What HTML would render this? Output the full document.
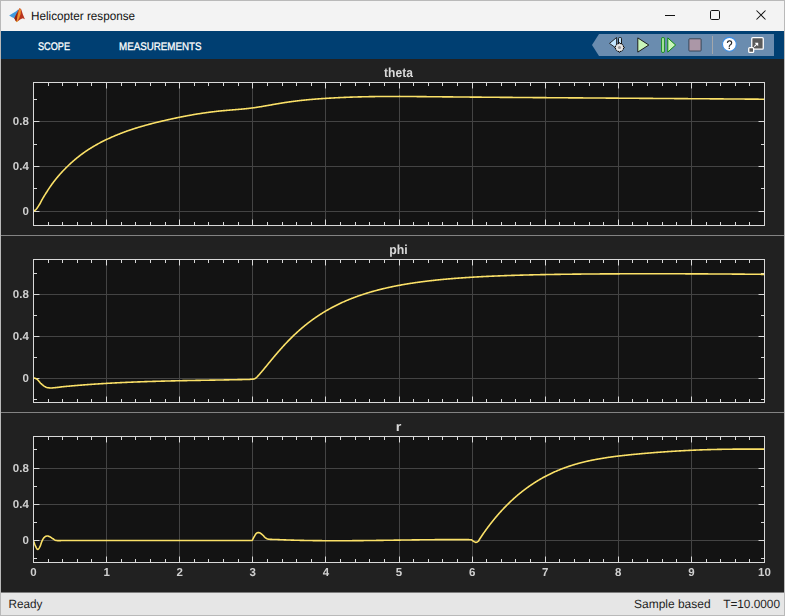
<!DOCTYPE html>
<html><head><meta charset="utf-8"><style>
html,body{margin:0;padding:0;width:785px;height:616px;overflow:hidden;background:#f3f3f3}
svg{position:absolute;left:0;top:0;display:block}
text{text-rendering:geometricPrecision;font-family:"Liberation Sans",sans-serif}
.tl{font-size:11.5px;font-weight:bold;fill:#cfcfcf}
.tt{font-size:13px;font-weight:bold;fill:#d9d9d9}
</style></head><body>
<svg width="785" height="616" viewBox="0 0 785 616" shape-rendering="crispEdges">
<!-- window frame -->
<rect x="0" y="0" width="785" height="616" fill="#b9b9b9"/>
<rect x="1" y="1" width="783" height="30" fill="#f3f3f3"/>
<!-- title -->
<g shape-rendering="geometricPrecision">
 <path d="M9.2,15.4 L12.8,13.2 L15.8,11.6 L18.4,9.2 L18.6,11.5 L16,15.5 L14.3,18.2 L12,17.2 Z" fill="#3f9ade"/>
 <path d="M14.3,18.2 L16.2,14.5 L18.3,10.2 L19.7,7.9 L21.3,9.6 L22.8,14.2 L24.9,19.3 L22.8,18.2 L20.5,19.2 L17.8,21.2 L16.4,22 Z" fill="#b8341e"/>
 <path d="M14.3,18.2 L16.2,14.5 L17.6,12 L17.2,17.5 L16.4,22 Z" fill="#8e2414"/>
 <path d="M19.7,8.2 L20.9,9.8 L20.6,14 L19.2,18 L17.4,21.4 L16.6,21.6 L17.3,17 L18.6,11.5 Z" fill="#f0922c"/>
 <path d="M16.1,21.9 L17.2,20.5 L17.6,21.3 L16.7,22.2 Z" fill="#f6c43e"/>
</g>
<text x="31" y="20" font-size="12" fill="#111" textLength="104" lengthAdjust="spacingAndGlyphs">Helicopter response</text>
<!-- window controls -->
<rect x="665" y="15" width="10" height="1" fill="#111"/>
<rect x="710.5" y="10.5" width="9" height="9" rx="1.2" fill="none" stroke="#111" stroke-width="1" shape-rendering="geometricPrecision"/>
<path d="M756.5,10.5 L765.5,19.5 M765.5,10.5 L756.5,19.5" stroke="#111" stroke-width="1.05" shape-rendering="geometricPrecision"/>
<!-- blue toolbar -->
<rect x="1" y="31" width="783" height="28" fill="#003f72"/>
<text x="38" y="50.2" font-size="11" fill="#ffffff" stroke="#ffffff" stroke-width="0.3" textLength="32" lengthAdjust="spacingAndGlyphs">SCOPE</text>
<text x="119" y="50.2" font-size="11" fill="#ffffff" stroke="#ffffff" stroke-width="0.3" textLength="82.5" lengthAdjust="spacingAndGlyphs">MEASUREMENTS</text>
<path d="M592,45 L599,34 L774,34 L774,56 L599,56 Z" fill="#6a8caf" shape-rendering="geometricPrecision"/>
<g shape-rendering="geometricPrecision">
 <!-- step back + gear -->
 <path d="M609.5,43.4 L616.6,37.5 L616.6,48.5 Z" fill="#c4e6ff" stroke="#1a1a1a" stroke-width="0.9" stroke-linejoin="round"/>
 <rect x="618.5" y="37.6" width="3" height="10" rx="0.8" fill="#c4e6ff" stroke="#1a1a1a" stroke-width="1"/>
 <g transform="translate(619.5,47.5)">
  <path d="M0,-5 L5,0 L0,5 L-5,0 Z" fill="#e6e6e6" stroke="#151515" stroke-width="1" stroke-linejoin="round"/>
  <rect x="-3.4" y="-3.4" width="6.8" height="6.8" rx="1.3" fill="#e6e6e6" stroke="#151515" stroke-width="1"/>
  <circle cx="0" cy="0" r="3.6" fill="#e6e6e6"/>
  <circle cx="0" cy="0" r="1.6" fill="#9a9a9a"/>
 </g>
 <!-- play -->
 <path d="M637.8,37.9 L637.8,52.1 L648.8,45 Z" fill="#c9f5b9" stroke="#1e1e1e" stroke-width="1" stroke-linejoin="round"/>
 <!-- step forward -->
 <rect x="661.7" y="37.7" width="2.6" height="14.6" rx="0.4" fill="#c9f5b9" stroke="#0d8a12" stroke-width="1"/>
 <path d="M667.8,37.9 L667.8,52.1 L675.6,45 Z" fill="#c9f5b9" stroke="#0d8a12" stroke-width="1" stroke-linejoin="round"/>
 <!-- stop -->
 <rect x="688.9" y="38.8" width="12.2" height="12.2" rx="0.7" fill="#ab97a7" stroke="#2c3a48" stroke-width="0.85"/>
 <rect x="712" y="36" width="1" height="18" fill="#a3a7ab"/>
 <!-- help -->
 <circle cx="729.4" cy="44.3" r="6.9" fill="#ffffff" stroke="#3a8ee6" stroke-width="1.1"/>
 <g filter="url(#gf)"><text x="729.5" y="48.8" text-anchor="middle" font-size="12.5" fill="#111111" stroke="#111" stroke-width="0.2" textLength="6" lengthAdjust="spacingAndGlyphs">?</text></g>
 <!-- undock -->
 <rect x="751.75" y="37.65" width="11.5" height="11.5" rx="1" fill="#5a5a5a" stroke="#ffffff" stroke-width="1.3"/>
 <rect x="748.75" y="47.55" width="4.9" height="4.9" rx="1" fill="#5a5a5a" stroke="#ffffff" stroke-width="1.3"/>
 <path d="M754.3,46.6 L757.6,43.3" stroke="#ffffff" stroke-width="1.1"/>
 <path d="M754.6,42.7 L758.2,42.7 L758.2,46.3 Z" fill="#ffffff"/>
</g>
<!-- dark area -->
<rect x="1" y="59" width="783" height="533" fill="#212121"/>
<rect x="1" y="234" width="783" height="3" fill="#212121"/>
<rect x="1" y="235" width="783" height="1" fill="#838383"/>
<rect x="1" y="411" width="783" height="3" fill="#212121"/>
<rect x="1" y="412" width="783" height="1" fill="#838383"/>
<rect x="33" y="82" width="732" height="144" fill="#131313"/>
<rect x="34" y="211" width="730" height="1" fill="#444444"/>
<rect x="34" y="166" width="730" height="1" fill="#444444"/>
<rect x="34" y="121" width="730" height="1" fill="#444444"/>
<rect x="106" y="83" width="1" height="142" fill="#444444"/>
<rect x="179" y="83" width="1" height="142" fill="#444444"/>
<rect x="252" y="83" width="1" height="142" fill="#444444"/>
<rect x="325" y="83" width="1" height="142" fill="#444444"/>
<rect x="399" y="83" width="1" height="142" fill="#444444"/>
<rect x="472" y="83" width="1" height="142" fill="#444444"/>
<rect x="545" y="83" width="1" height="142" fill="#444444"/>
<rect x="618" y="83" width="1" height="142" fill="#444444"/>
<rect x="691" y="83" width="1" height="142" fill="#444444"/>
<rect x="48" y="83" width="1" height="3" fill="#d9d9d9"/>
<rect x="48" y="222" width="1" height="3" fill="#d9d9d9"/>
<rect x="62" y="83" width="1" height="3" fill="#d9d9d9"/>
<rect x="62" y="222" width="1" height="3" fill="#d9d9d9"/>
<rect x="77" y="83" width="1" height="3" fill="#d9d9d9"/>
<rect x="77" y="222" width="1" height="3" fill="#d9d9d9"/>
<rect x="91" y="83" width="1" height="3" fill="#d9d9d9"/>
<rect x="91" y="222" width="1" height="3" fill="#d9d9d9"/>
<rect x="106" y="83" width="1" height="5" fill="#d9d9d9"/>
<rect x="106" y="220" width="1" height="5" fill="#d9d9d9"/>
<rect x="106" y="88" width="1" height="1" fill="#8a8a8a"/>
<rect x="106" y="219" width="1" height="1" fill="#8a8a8a"/>
<rect x="121" y="83" width="1" height="3" fill="#d9d9d9"/>
<rect x="121" y="222" width="1" height="3" fill="#d9d9d9"/>
<rect x="135" y="83" width="1" height="3" fill="#d9d9d9"/>
<rect x="135" y="222" width="1" height="3" fill="#d9d9d9"/>
<rect x="150" y="83" width="1" height="3" fill="#d9d9d9"/>
<rect x="150" y="222" width="1" height="3" fill="#d9d9d9"/>
<rect x="165" y="83" width="1" height="3" fill="#d9d9d9"/>
<rect x="165" y="222" width="1" height="3" fill="#d9d9d9"/>
<rect x="179" y="83" width="1" height="5" fill="#d9d9d9"/>
<rect x="179" y="220" width="1" height="5" fill="#d9d9d9"/>
<rect x="179" y="88" width="1" height="1" fill="#8a8a8a"/>
<rect x="179" y="219" width="1" height="1" fill="#8a8a8a"/>
<rect x="194" y="83" width="1" height="3" fill="#d9d9d9"/>
<rect x="194" y="222" width="1" height="3" fill="#d9d9d9"/>
<rect x="208" y="83" width="1" height="3" fill="#d9d9d9"/>
<rect x="208" y="222" width="1" height="3" fill="#d9d9d9"/>
<rect x="223" y="83" width="1" height="3" fill="#d9d9d9"/>
<rect x="223" y="222" width="1" height="3" fill="#d9d9d9"/>
<rect x="238" y="83" width="1" height="3" fill="#d9d9d9"/>
<rect x="238" y="222" width="1" height="3" fill="#d9d9d9"/>
<rect x="252" y="83" width="1" height="5" fill="#d9d9d9"/>
<rect x="252" y="220" width="1" height="5" fill="#d9d9d9"/>
<rect x="252" y="88" width="1" height="1" fill="#8a8a8a"/>
<rect x="252" y="219" width="1" height="1" fill="#8a8a8a"/>
<rect x="267" y="83" width="1" height="3" fill="#d9d9d9"/>
<rect x="267" y="222" width="1" height="3" fill="#d9d9d9"/>
<rect x="282" y="83" width="1" height="3" fill="#d9d9d9"/>
<rect x="282" y="222" width="1" height="3" fill="#d9d9d9"/>
<rect x="296" y="83" width="1" height="3" fill="#d9d9d9"/>
<rect x="296" y="222" width="1" height="3" fill="#d9d9d9"/>
<rect x="311" y="83" width="1" height="3" fill="#d9d9d9"/>
<rect x="311" y="222" width="1" height="3" fill="#d9d9d9"/>
<rect x="325" y="83" width="1" height="5" fill="#d9d9d9"/>
<rect x="325" y="220" width="1" height="5" fill="#d9d9d9"/>
<rect x="325" y="88" width="1" height="1" fill="#8a8a8a"/>
<rect x="325" y="219" width="1" height="1" fill="#8a8a8a"/>
<rect x="340" y="83" width="1" height="3" fill="#d9d9d9"/>
<rect x="340" y="222" width="1" height="3" fill="#d9d9d9"/>
<rect x="355" y="83" width="1" height="3" fill="#d9d9d9"/>
<rect x="355" y="222" width="1" height="3" fill="#d9d9d9"/>
<rect x="369" y="83" width="1" height="3" fill="#d9d9d9"/>
<rect x="369" y="222" width="1" height="3" fill="#d9d9d9"/>
<rect x="384" y="83" width="1" height="3" fill="#d9d9d9"/>
<rect x="384" y="222" width="1" height="3" fill="#d9d9d9"/>
<rect x="399" y="83" width="1" height="5" fill="#d9d9d9"/>
<rect x="399" y="220" width="1" height="5" fill="#d9d9d9"/>
<rect x="399" y="88" width="1" height="1" fill="#8a8a8a"/>
<rect x="399" y="219" width="1" height="1" fill="#8a8a8a"/>
<rect x="413" y="83" width="1" height="3" fill="#d9d9d9"/>
<rect x="413" y="222" width="1" height="3" fill="#d9d9d9"/>
<rect x="428" y="83" width="1" height="3" fill="#d9d9d9"/>
<rect x="428" y="222" width="1" height="3" fill="#d9d9d9"/>
<rect x="442" y="83" width="1" height="3" fill="#d9d9d9"/>
<rect x="442" y="222" width="1" height="3" fill="#d9d9d9"/>
<rect x="457" y="83" width="1" height="3" fill="#d9d9d9"/>
<rect x="457" y="222" width="1" height="3" fill="#d9d9d9"/>
<rect x="472" y="83" width="1" height="5" fill="#d9d9d9"/>
<rect x="472" y="220" width="1" height="5" fill="#d9d9d9"/>
<rect x="472" y="88" width="1" height="1" fill="#8a8a8a"/>
<rect x="472" y="219" width="1" height="1" fill="#8a8a8a"/>
<rect x="486" y="83" width="1" height="3" fill="#d9d9d9"/>
<rect x="486" y="222" width="1" height="3" fill="#d9d9d9"/>
<rect x="501" y="83" width="1" height="3" fill="#d9d9d9"/>
<rect x="501" y="222" width="1" height="3" fill="#d9d9d9"/>
<rect x="515" y="83" width="1" height="3" fill="#d9d9d9"/>
<rect x="515" y="222" width="1" height="3" fill="#d9d9d9"/>
<rect x="530" y="83" width="1" height="3" fill="#d9d9d9"/>
<rect x="530" y="222" width="1" height="3" fill="#d9d9d9"/>
<rect x="545" y="83" width="1" height="5" fill="#d9d9d9"/>
<rect x="545" y="220" width="1" height="5" fill="#d9d9d9"/>
<rect x="545" y="88" width="1" height="1" fill="#8a8a8a"/>
<rect x="545" y="219" width="1" height="1" fill="#8a8a8a"/>
<rect x="559" y="83" width="1" height="3" fill="#d9d9d9"/>
<rect x="559" y="222" width="1" height="3" fill="#d9d9d9"/>
<rect x="574" y="83" width="1" height="3" fill="#d9d9d9"/>
<rect x="574" y="222" width="1" height="3" fill="#d9d9d9"/>
<rect x="589" y="83" width="1" height="3" fill="#d9d9d9"/>
<rect x="589" y="222" width="1" height="3" fill="#d9d9d9"/>
<rect x="603" y="83" width="1" height="3" fill="#d9d9d9"/>
<rect x="603" y="222" width="1" height="3" fill="#d9d9d9"/>
<rect x="618" y="83" width="1" height="5" fill="#d9d9d9"/>
<rect x="618" y="220" width="1" height="5" fill="#d9d9d9"/>
<rect x="618" y="88" width="1" height="1" fill="#8a8a8a"/>
<rect x="618" y="219" width="1" height="1" fill="#8a8a8a"/>
<rect x="632" y="83" width="1" height="3" fill="#d9d9d9"/>
<rect x="632" y="222" width="1" height="3" fill="#d9d9d9"/>
<rect x="647" y="83" width="1" height="3" fill="#d9d9d9"/>
<rect x="647" y="222" width="1" height="3" fill="#d9d9d9"/>
<rect x="662" y="83" width="1" height="3" fill="#d9d9d9"/>
<rect x="662" y="222" width="1" height="3" fill="#d9d9d9"/>
<rect x="676" y="83" width="1" height="3" fill="#d9d9d9"/>
<rect x="676" y="222" width="1" height="3" fill="#d9d9d9"/>
<rect x="691" y="83" width="1" height="5" fill="#d9d9d9"/>
<rect x="691" y="220" width="1" height="5" fill="#d9d9d9"/>
<rect x="691" y="88" width="1" height="1" fill="#8a8a8a"/>
<rect x="691" y="219" width="1" height="1" fill="#8a8a8a"/>
<rect x="706" y="83" width="1" height="3" fill="#d9d9d9"/>
<rect x="706" y="222" width="1" height="3" fill="#d9d9d9"/>
<rect x="720" y="83" width="1" height="3" fill="#d9d9d9"/>
<rect x="720" y="222" width="1" height="3" fill="#d9d9d9"/>
<rect x="735" y="83" width="1" height="3" fill="#d9d9d9"/>
<rect x="735" y="222" width="1" height="3" fill="#d9d9d9"/>
<rect x="749" y="83" width="1" height="3" fill="#d9d9d9"/>
<rect x="749" y="222" width="1" height="3" fill="#d9d9d9"/>
<rect x="34" y="99" width="3" height="1" fill="#d9d9d9"/>
<rect x="761" y="99" width="3" height="1" fill="#d9d9d9"/>
<rect x="34" y="121" width="5" height="1" fill="#d9d9d9"/>
<rect x="759" y="121" width="5" height="1" fill="#d9d9d9"/>
<rect x="39" y="121" width="1" height="1" fill="#8a8a8a"/>
<rect x="758" y="121" width="1" height="1" fill="#8a8a8a"/>
<rect x="34" y="144" width="3" height="1" fill="#d9d9d9"/>
<rect x="761" y="144" width="3" height="1" fill="#d9d9d9"/>
<rect x="34" y="166" width="5" height="1" fill="#d9d9d9"/>
<rect x="759" y="166" width="5" height="1" fill="#d9d9d9"/>
<rect x="39" y="166" width="1" height="1" fill="#8a8a8a"/>
<rect x="758" y="166" width="1" height="1" fill="#8a8a8a"/>
<rect x="34" y="188" width="3" height="1" fill="#d9d9d9"/>
<rect x="761" y="188" width="3" height="1" fill="#d9d9d9"/>
<rect x="34" y="211" width="5" height="1" fill="#d9d9d9"/>
<rect x="759" y="211" width="5" height="1" fill="#d9d9d9"/>
<rect x="39" y="211" width="1" height="1" fill="#8a8a8a"/>
<rect x="758" y="211" width="1" height="1" fill="#8a8a8a"/>
<rect x="33.5" y="82.5" width="731" height="143" fill="none" stroke="#d9d9d9" stroke-width="1"/>
<clipPath id="c82"><rect x="34" y="83" width="730" height="142"/></clipPath>
<path d="M33.50,211.00 L33.62,210.96 L33.78,210.92 L33.98,210.86 L34.19,210.79 L34.40,210.71 L34.60,210.60 L34.79,210.47 L34.99,210.33 L35.19,210.16 L35.40,209.99 L35.60,209.80 L35.80,209.60 L36.00,209.39 L36.20,209.17 L36.41,208.94 L36.61,208.70 L36.81,208.45 L37.00,208.20 L37.18,207.97 L37.33,207.76 L37.48,207.54 L37.65,207.29 L37.85,206.98 L38.10,206.60 L38.44,206.07 L38.86,205.41 L39.32,204.70 L39.76,204.01 L40.14,203.43 L40.40,203.05 L40.90,201.78 L41.40,200.87 L41.90,199.97 L42.40,199.08 L42.90,198.21 L43.40,197.36 L43.90,196.52 L44.40,195.69 L44.90,194.88 L45.40,194.08 L45.90,193.30 L46.40,192.53 L46.90,191.78 L47.40,190.99 L47.90,190.19 L48.40,189.41 L48.90,188.64 L49.40,187.89 L49.90,187.14 L50.40,186.41 L50.90,185.69 L51.40,184.98 L51.90,184.28 L52.40,183.59 L52.90,182.91 L53.40,182.24 L53.90,181.58 L54.40,180.93 L54.90,180.29 L55.40,179.65 L55.90,179.03 L56.40,178.41 L56.90,177.80 L57.40,177.20 L57.90,176.61 L58.40,176.03 L58.90,175.45 L59.40,174.87 L59.90,174.31 L60.40,173.75 L60.90,173.20 L61.40,172.65 L61.90,172.10 L62.40,171.57 L62.90,171.03 L63.40,170.51 L63.90,169.98 L64.40,169.46 L64.90,168.95 L65.40,168.44 L65.90,167.94 L66.40,167.44 L66.90,166.95 L67.40,166.46 L67.90,165.97 L68.40,165.49 L68.90,165.01 L69.40,164.54 L69.90,164.08 L70.40,163.61 L70.90,163.15 L71.40,162.70 L71.90,162.25 L72.40,161.81 L72.90,161.36 L73.40,160.93 L73.90,160.50 L74.40,160.07 L74.90,159.64 L75.40,159.22 L75.90,158.81 L76.40,158.39 L76.90,157.99 L77.40,157.58 L77.90,157.18 L78.40,156.78 L78.90,156.39 L79.40,156.00 L79.90,155.62 L80.40,155.23 L80.90,154.86 L81.40,154.48 L81.90,154.11 L82.40,153.74 L82.90,153.38 L83.40,153.02 L83.90,152.66 L84.40,152.31 L84.90,151.96 L85.40,151.61 L85.90,151.27 L86.40,150.93 L86.90,150.59 L87.40,150.26 L87.90,149.93 L88.40,149.60 L88.90,149.28 L89.40,148.95 L89.90,148.64 L90.40,148.32 L90.90,148.01 L91.40,147.70 L91.90,147.39 L92.40,147.09 L92.90,146.79 L93.40,146.49 L93.90,146.19 L94.40,145.90 L94.90,145.61 L95.40,145.32 L95.90,145.04 L96.40,144.75 L96.90,144.47 L97.40,144.20 L97.90,143.92 L98.40,143.65 L98.90,143.38 L99.40,143.11 L99.90,142.84 L100.40,142.58 L100.90,142.32 L101.40,142.06 L101.90,141.80 L102.40,141.55 L102.90,141.29 L103.40,141.04 L103.90,140.79 L104.40,140.55 L104.90,140.30 L105.40,140.06 L105.90,139.82 L106.40,139.58 L106.90,139.34 L107.40,139.10 L107.90,138.87 L108.40,138.64 L108.90,138.41 L109.40,138.18 L109.90,137.95 L110.40,137.72 L110.90,137.50 L111.40,137.28 L111.90,137.05 L112.40,136.84 L112.90,136.62 L113.40,136.40 L113.90,136.19 L114.40,135.97 L114.90,135.76 L115.40,135.55 L115.90,135.34 L116.40,135.14 L116.90,134.93 L117.40,134.73 L117.90,134.53 L118.40,134.32 L118.90,134.13 L119.40,133.93 L119.90,133.73 L120.40,133.54 L120.90,133.34 L121.40,133.15 L121.90,132.96 L122.40,132.77 L122.90,132.58 L123.40,132.39 L123.90,132.21 L124.40,132.03 L124.90,131.84 L125.40,131.66 L125.90,131.48 L126.40,131.30 L126.90,131.12 L127.40,130.95 L127.90,130.77 L128.40,130.60 L128.90,130.43 L129.40,130.26 L129.90,130.09 L130.40,129.92 L130.90,129.75 L131.40,129.58 L131.90,129.42 L132.40,129.25 L132.90,129.09 L133.40,128.93 L133.90,128.77 L134.40,128.61 L134.90,128.45 L135.40,128.29 L135.90,128.13 L136.40,127.98 L136.90,127.82 L137.40,127.67 L137.90,127.52 L138.40,127.36 L138.90,127.21 L139.40,127.06 L139.90,126.91 L140.40,126.77 L140.90,126.62 L141.40,126.47 L141.90,126.33 L142.40,126.18 L142.90,126.04 L143.40,125.90 L143.90,125.76 L144.40,125.62 L144.90,125.48 L145.40,125.34 L145.90,125.20 L146.40,125.06 L146.90,124.93 L147.40,124.79 L147.90,124.66 L148.40,124.52 L148.90,124.39 L149.40,124.25 L149.90,124.12 L150.40,123.99 L150.90,123.86 L151.40,123.73 L151.90,123.60 L152.40,123.47 L152.90,123.34 L153.40,123.22 L153.90,123.09 L154.40,122.96 L154.90,122.84 L155.40,122.71 L155.90,122.59 L156.40,122.47 L156.90,122.34 L157.40,122.22 L157.90,122.10 L158.40,121.98 L158.90,121.85 L159.40,121.73 L159.90,121.61 L160.40,121.49 L160.90,121.37 L161.40,121.25 L161.90,121.14 L162.40,121.02 L162.90,120.90 L163.40,120.78 L163.90,120.67 L164.40,120.55 L164.90,120.43 L165.40,120.32 L165.90,120.20 L166.40,120.09 L166.90,119.98 L167.40,119.86 L167.90,119.75 L168.40,119.64 L168.90,119.52 L169.40,119.41 L169.90,119.30 L170.40,119.19 L170.90,119.08 L171.40,118.97 L171.90,118.86 L172.40,118.75 L172.90,118.64 L173.40,118.54 L173.90,118.43 L174.40,118.32 L174.90,118.22 L175.40,118.11 L175.90,118.01 L176.40,117.90 L176.90,117.80 L177.40,117.69 L177.90,117.59 L178.40,117.49 L178.90,117.38 L179.40,117.28 L179.90,117.18 L180.40,117.08 L180.90,116.98 L181.40,116.88 L181.90,116.78 L182.40,116.68 L182.90,116.59 L183.40,116.49 L183.90,116.39 L184.40,116.30 L184.90,116.20 L185.40,116.10 L185.90,116.01 L186.40,115.92 L186.90,115.82 L187.40,115.73 L187.90,115.64 L188.40,115.54 L188.90,115.45 L189.40,115.36 L189.90,115.27 L190.40,115.18 L190.90,115.09 L191.40,115.01 L191.90,114.92 L192.40,114.83 L192.90,114.74 L193.40,114.66 L193.90,114.57 L194.40,114.49 L194.90,114.40 L195.40,114.32 L195.90,114.24 L196.40,114.15 L196.90,114.07 L197.40,113.99 L197.90,113.91 L198.40,113.83 L198.90,113.75 L199.40,113.67 L199.90,113.59 L200.40,113.52 L200.90,113.44 L201.40,113.36 L201.90,113.29 L202.40,113.21 L202.90,113.14 L203.40,113.06 L203.90,112.99 L204.40,112.92 L204.90,112.85 L205.40,112.77 L205.90,112.70 L206.40,112.63 L206.90,112.57 L207.40,112.50 L207.90,112.43 L208.40,112.36 L208.90,112.30 L209.40,112.23 L209.90,112.16 L210.40,112.10 L210.90,112.04 L211.40,111.97 L211.90,111.91 L212.40,111.85 L212.90,111.79 L213.40,111.73 L213.90,111.67 L214.40,111.61 L214.90,111.55 L215.40,111.49 L215.90,111.44 L216.40,111.38 L216.90,111.32 L217.40,111.27 L217.90,111.21 L218.40,111.16 L218.90,111.11 L219.40,111.06 L219.90,111.01 L220.40,110.96 L220.90,110.91 L221.40,110.86 L221.90,110.81 L222.40,110.76 L222.90,110.71 L223.40,110.67 L223.90,110.62 L224.40,110.58 L224.90,110.53 L225.40,110.49 L225.90,110.44 L226.40,110.40 L226.90,110.36 L227.40,110.31 L227.90,110.27 L228.40,110.23 L228.90,110.19 L229.40,110.15 L229.90,110.11 L230.40,110.06 L230.90,110.02 L231.40,109.98 L231.90,109.94 L232.40,109.90 L232.90,109.86 L233.40,109.82 L233.90,109.78 L234.40,109.74 L234.90,109.70 L235.40,109.66 L235.90,109.61 L236.40,109.57 L236.90,109.53 L237.40,109.49 L237.90,109.45 L238.40,109.40 L238.90,109.36 L239.40,109.32 L239.90,109.27 L240.40,109.23 L240.90,109.18 L241.40,109.14 L241.90,109.09 L242.40,109.05 L242.90,109.00 L243.40,108.95 L243.90,108.90 L244.40,108.85 L244.90,108.80 L245.40,108.75 L245.90,108.70 L246.40,108.65 L246.90,108.59 L247.40,108.54 L247.90,108.48 L248.40,108.43 L248.90,108.37 L249.40,108.31 L249.90,108.25 L250.40,108.19 L250.90,108.13 L251.40,108.07 L251.90,108.01 L252.40,107.94 L252.90,107.87 L253.40,107.81 L253.90,107.74 L254.40,107.67 L254.90,107.60 L255.40,107.53 L255.90,107.45 L256.40,107.38 L256.90,107.30 L257.40,107.23 L257.90,107.15 L258.40,107.07 L258.90,106.99 L259.40,106.91 L259.90,106.83 L260.40,106.75 L260.90,106.67 L261.40,106.59 L261.90,106.50 L262.40,106.42 L262.90,106.33 L263.40,106.25 L263.90,106.16 L264.40,106.08 L264.90,105.99 L265.40,105.90 L265.90,105.82 L266.40,105.73 L266.90,105.64 L267.40,105.55 L267.90,105.46 L268.40,105.38 L268.90,105.29 L269.40,105.20 L269.90,105.11 L270.40,105.02 L270.90,104.93 L271.40,104.84 L271.90,104.75 L272.40,104.66 L272.90,104.57 L273.40,104.49 L273.90,104.40 L274.40,104.31 L274.90,104.22 L275.40,104.13 L275.90,104.05 L276.40,103.96 L276.90,103.87 L277.40,103.79 L277.90,103.70 L278.40,103.61 L278.90,103.53 L279.40,103.45 L279.90,103.36 L280.40,103.28 L280.90,103.20 L281.40,103.12 L281.90,103.03 L282.40,102.95 L282.90,102.87 L283.40,102.80 L283.90,102.72 L284.40,102.64 L284.90,102.56 L285.40,102.49 L285.90,102.41 L286.40,102.34 L286.90,102.27 L287.40,102.19 L287.90,102.12 L288.40,102.05 L288.90,101.98 L289.40,101.91 L289.90,101.84 L290.40,101.77 L290.90,101.70 L291.40,101.63 L291.90,101.56 L292.40,101.50 L292.90,101.43 L293.40,101.37 L293.90,101.30 L294.40,101.24 L294.90,101.18 L295.40,101.11 L295.90,101.05 L296.40,100.99 L296.90,100.93 L297.40,100.87 L297.90,100.81 L298.40,100.75 L298.90,100.69 L299.40,100.64 L299.90,100.58 L300.40,100.52 L300.90,100.47 L301.40,100.41 L301.90,100.36 L302.40,100.30 L302.90,100.25 L303.40,100.20 L303.90,100.15 L304.40,100.09 L304.90,100.04 L305.40,99.99 L305.90,99.94 L306.40,99.89 L306.90,99.84 L307.40,99.80 L307.90,99.75 L308.40,99.70 L308.90,99.65 L309.40,99.61 L309.90,99.56 L310.40,99.52 L310.90,99.47 L311.40,99.43 L311.90,99.39 L312.40,99.34 L312.90,99.30 L313.40,99.26 L313.90,99.22 L314.40,99.18 L314.90,99.14 L315.40,99.10 L315.90,99.06 L316.40,99.02 L316.90,98.98 L317.40,98.94 L317.90,98.90 L318.40,98.87 L318.90,98.83 L319.40,98.79 L319.90,98.76 L320.40,98.72 L320.90,98.69 L321.40,98.66 L321.90,98.62 L322.40,98.59 L322.90,98.56 L323.40,98.52 L323.90,98.49 L324.40,98.46 L324.90,98.43 L325.40,98.40 L325.90,98.37 L326.40,98.34 L326.90,98.31 L327.40,98.28 L327.90,98.25 L328.40,98.22 L328.90,98.20 L329.40,98.17 L329.90,98.14 L330.40,98.11 L330.90,98.08 L331.40,98.05 L331.90,98.02 L332.40,97.99 L332.90,97.96 L333.40,97.93 L333.90,97.90 L334.40,97.88 L334.90,97.85 L335.40,97.82 L335.90,97.79 L336.40,97.77 L336.90,97.74 L337.40,97.72 L337.90,97.69 L338.40,97.66 L338.90,97.64 L339.40,97.62 L339.90,97.59 L340.40,97.57 L340.90,97.54 L341.40,97.52 L341.90,97.50 L342.40,97.47 L342.90,97.45 L343.40,97.43 L343.90,97.41 L344.40,97.39 L344.90,97.37 L345.40,97.35 L345.90,97.33 L346.40,97.31 L346.90,97.29 L347.40,97.27 L347.90,97.25 L348.40,97.23 L348.90,97.21 L349.40,97.19 L349.90,97.17 L350.40,97.15 L350.90,97.14 L351.40,97.12 L351.90,97.10 L352.40,97.09 L352.90,97.07 L353.40,97.05 L353.90,97.04 L354.40,97.02 L354.90,97.01 L355.40,96.99 L355.90,96.98 L356.40,96.96 L356.90,96.95 L357.40,96.93 L357.90,96.92 L358.40,96.90 L358.90,96.89 L359.40,96.88 L359.90,96.86 L360.40,96.85 L360.90,96.84 L361.40,96.83 L361.90,96.81 L362.40,96.80 L362.90,96.79 L363.40,96.78 L363.90,96.77 L364.40,96.76 L364.90,96.75 L365.40,96.74 L365.90,96.73 L366.40,96.72 L366.90,96.71 L367.40,96.70 L367.90,96.69 L368.40,96.68 L368.90,96.67 L369.40,96.66 L369.90,96.65 L370.40,96.64 L370.90,96.64 L371.40,96.63 L371.90,96.62 L372.40,96.61 L372.90,96.60 L373.40,96.60 L373.90,96.59 L374.40,96.58 L374.90,96.58 L375.40,96.57 L375.90,96.56 L376.40,96.56 L376.90,96.55 L377.40,96.55 L377.90,96.54 L378.40,96.53 L378.90,96.53 L379.40,96.52 L379.90,96.52 L380.40,96.51 L380.90,96.51 L381.40,96.51 L381.90,96.50 L382.40,96.50 L382.90,96.49 L383.40,96.49 L383.90,96.48 L384.40,96.48 L384.90,96.48 L385.40,96.47 L385.90,96.47 L386.40,96.47 L386.90,96.46 L387.40,96.46 L387.90,96.46 L388.40,96.46 L388.90,96.45 L389.40,96.45 L389.90,96.45 L390.40,96.45 L390.90,96.44 L391.40,96.44 L391.90,96.44 L392.40,96.44 L392.90,96.44 L393.40,96.44 L393.90,96.43 L394.40,96.43 L394.90,96.43 L395.40,96.43 L395.90,96.43 L396.40,96.43 L396.90,96.43 L397.40,96.43 L397.90,96.43 L398.40,96.43 L398.90,96.43 L399.40,96.42 L399.90,96.42 L400.40,96.43 L400.90,96.43 L401.40,96.43 L401.90,96.44 L402.40,96.44 L402.90,96.45 L403.40,96.45 L403.90,96.46 L404.40,96.46 L404.90,96.46 L405.40,96.47 L405.90,96.47 L406.40,96.48 L406.90,96.48 L407.40,96.49 L407.90,96.49 L408.40,96.50 L408.90,96.50 L409.40,96.50 L409.90,96.51 L410.40,96.51 L410.90,96.52 L411.40,96.52 L411.90,96.53 L412.40,96.53 L412.90,96.54 L413.40,96.54 L413.90,96.55 L414.40,96.55 L414.90,96.56 L415.40,96.56 L415.90,96.57 L416.40,96.57 L416.90,96.58 L417.40,96.58 L417.90,96.59 L418.40,96.59 L418.90,96.60 L419.40,96.60 L419.90,96.61 L420.40,96.61 L420.90,96.62 L421.40,96.62 L421.90,96.63 L422.40,96.63 L422.90,96.64 L423.40,96.64 L423.90,96.65 L424.40,96.65 L424.90,96.66 L425.40,96.66 L425.90,96.67 L426.40,96.67 L426.90,96.68 L427.40,96.68 L427.90,96.69 L428.40,96.69 L428.90,96.70 L429.40,96.70 L429.90,96.71 L430.40,96.71 L430.90,96.72 L431.40,96.72 L431.90,96.73 L432.40,96.73 L432.90,96.74 L433.40,96.74 L433.90,96.75 L434.40,96.75 L434.90,96.76 L435.40,96.76 L435.90,96.77 L436.40,96.77 L436.90,96.78 L437.40,96.78 L437.90,96.78 L438.40,96.79 L438.90,96.79 L439.40,96.80 L439.90,96.80 L440.40,96.81 L440.90,96.81 L441.40,96.82 L441.90,96.82 L442.40,96.83 L442.90,96.83 L443.40,96.84 L443.90,96.84 L444.40,96.85 L444.90,96.85 L445.40,96.86 L445.90,96.86 L446.40,96.86 L446.90,96.87 L447.40,96.87 L447.90,96.88 L448.40,96.88 L448.90,96.89 L449.40,96.89 L449.90,96.90 L450.40,96.90 L450.90,96.91 L451.40,96.91 L451.90,96.92 L452.40,96.92 L452.90,96.92 L453.40,96.93 L453.90,96.93 L454.40,96.94 L454.90,96.94 L455.40,96.95 L455.90,96.95 L456.40,96.96 L456.90,96.96 L457.40,96.97 L457.90,96.97 L458.40,96.97 L458.90,96.98 L459.40,96.98 L459.90,96.99 L460.40,96.99 L460.90,97.00 L461.40,97.00 L461.90,97.01 L462.40,97.01 L462.90,97.01 L463.40,97.02 L463.90,97.02 L464.40,97.03 L464.90,97.03 L465.40,97.04 L465.90,97.04 L466.40,97.05 L466.90,97.05 L467.40,97.05 L467.90,97.06 L468.40,97.06 L468.90,97.07 L469.40,97.07 L469.90,97.08 L470.40,97.08 L470.90,97.08 L471.40,97.09 L471.90,97.09 L472.40,97.10 L472.90,97.10 L473.40,97.11 L473.90,97.11 L474.40,97.11 L474.90,97.12 L475.40,97.12 L475.90,97.13 L476.40,97.13 L476.90,97.14 L477.40,97.14 L477.90,97.14 L478.40,97.15 L478.90,97.15 L479.40,97.16 L479.90,97.16 L480.40,97.17 L480.90,97.17 L481.40,97.17 L481.90,97.18 L482.40,97.18 L482.90,97.19 L483.40,97.19 L483.90,97.19 L484.40,97.20 L484.90,97.20 L485.40,97.21 L485.90,97.21 L486.40,97.22 L486.90,97.22 L487.40,97.22 L487.90,97.23 L488.40,97.23 L488.90,97.24 L489.40,97.24 L489.90,97.24 L490.40,97.25 L490.90,97.25 L491.40,97.26 L491.90,97.26 L492.40,97.26 L492.90,97.27 L493.40,97.27 L493.90,97.28 L494.40,97.28 L494.90,97.29 L495.40,97.29 L495.90,97.29 L496.40,97.30 L496.90,97.30 L497.40,97.31 L497.90,97.31 L498.40,97.31 L498.90,97.32 L499.40,97.32 L499.90,97.33 L500.40,97.33 L500.90,97.33 L501.40,97.34 L501.90,97.34 L502.40,97.35 L502.90,97.35 L503.40,97.35 L503.90,97.36 L504.40,97.36 L504.90,97.37 L505.40,97.37 L505.90,97.37 L506.40,97.38 L506.90,97.38 L507.40,97.38 L507.90,97.39 L508.40,97.39 L508.90,97.40 L509.40,97.40 L509.90,97.40 L510.40,97.41 L510.90,97.41 L511.40,97.42 L511.90,97.42 L512.40,97.42 L512.90,97.43 L513.40,97.43 L513.90,97.44 L514.40,97.44 L514.90,97.44 L515.40,97.45 L515.90,97.45 L516.40,97.45 L516.90,97.46 L517.40,97.46 L517.90,97.47 L518.40,97.47 L518.90,97.47 L519.40,97.48 L519.90,97.48 L520.40,97.48 L520.90,97.49 L521.40,97.49 L521.90,97.50 L522.40,97.50 L522.90,97.50 L523.40,97.51 L523.90,97.51 L524.40,97.51 L524.90,97.52 L525.40,97.52 L525.90,97.53 L526.40,97.53 L526.90,97.53 L527.40,97.54 L527.90,97.54 L528.40,97.54 L528.90,97.55 L529.40,97.55 L529.90,97.56 L530.40,97.56 L530.90,97.56 L531.40,97.57 L531.90,97.57 L532.40,97.57 L532.90,97.58 L533.40,97.58 L533.90,97.58 L534.40,97.59 L534.90,97.59 L535.40,97.60 L535.90,97.60 L536.40,97.60 L536.90,97.61 L537.40,97.61 L537.90,97.61 L538.40,97.62 L538.90,97.62 L539.40,97.62 L539.90,97.63 L540.40,97.63 L540.90,97.64 L541.40,97.64 L541.90,97.64 L542.40,97.65 L542.90,97.65 L543.40,97.65 L543.90,97.66 L544.40,97.66 L544.90,97.66 L545.40,97.67 L545.90,97.67 L546.40,97.67 L546.90,97.68 L547.40,97.68 L547.90,97.69 L548.40,97.69 L548.90,97.69 L549.40,97.70 L549.90,97.70 L550.40,97.70 L550.90,97.71 L551.40,97.71 L551.90,97.71 L552.40,97.72 L552.90,97.72 L553.40,97.72 L553.90,97.73 L554.40,97.73 L554.90,97.73 L555.40,97.74 L555.90,97.74 L556.40,97.74 L556.90,97.75 L557.40,97.75 L557.90,97.76 L558.40,97.76 L558.90,97.76 L559.40,97.77 L559.90,97.77 L560.40,97.77 L560.90,97.78 L561.40,97.78 L561.90,97.78 L562.40,97.79 L562.90,97.79 L563.40,97.79 L563.90,97.80 L564.40,97.80 L564.90,97.80 L565.40,97.81 L565.90,97.81 L566.40,97.81 L566.90,97.82 L567.40,97.82 L567.90,97.82 L568.40,97.83 L568.90,97.83 L569.40,97.83 L569.90,97.84 L570.40,97.84 L570.90,97.84 L571.40,97.85 L571.90,97.85 L572.40,97.85 L572.90,97.86 L573.40,97.86 L573.90,97.86 L574.40,97.87 L574.90,97.87 L575.40,97.87 L575.90,97.88 L576.40,97.88 L576.90,97.88 L577.40,97.89 L577.90,97.89 L578.40,97.89 L578.90,97.90 L579.40,97.90 L579.90,97.90 L580.40,97.91 L580.90,97.91 L581.40,97.91 L581.90,97.92 L582.40,97.92 L582.90,97.92 L583.40,97.93 L583.90,97.93 L584.40,97.93 L584.90,97.94 L585.40,97.94 L585.90,97.94 L586.40,97.95 L586.90,97.95 L587.40,97.95 L587.90,97.96 L588.40,97.96 L588.90,97.96 L589.40,97.97 L589.90,97.97 L590.40,97.97 L590.90,97.98 L591.40,97.98 L591.90,97.98 L592.40,97.98 L592.90,97.99 L593.40,97.99 L593.90,97.99 L594.40,98.00 L594.90,98.00 L595.40,98.00 L595.90,98.01 L596.40,98.01 L596.90,98.01 L597.40,98.02 L597.90,98.02 L598.40,98.02 L598.90,98.03 L599.40,98.03 L599.90,98.03 L600.40,98.04 L600.90,98.04 L601.40,98.04 L601.90,98.05 L602.40,98.05 L602.90,98.06 L603.40,98.06 L603.90,98.06 L604.40,98.07 L604.90,98.07 L605.40,98.07 L605.90,98.08 L606.40,98.08 L606.90,98.09 L607.40,98.09 L607.90,98.09 L608.40,98.10 L608.90,98.10 L609.40,98.10 L609.90,98.11 L610.40,98.11 L610.90,98.12 L611.40,98.12 L611.90,98.12 L612.40,98.13 L612.90,98.13 L613.40,98.13 L613.90,98.14 L614.40,98.14 L614.90,98.15 L615.40,98.15 L615.90,98.15 L616.40,98.16 L616.90,98.16 L617.40,98.16 L617.90,98.17 L618.40,98.17 L618.90,98.18 L619.40,98.18 L619.90,98.18 L620.40,98.19 L620.90,98.19 L621.40,98.19 L621.90,98.20 L622.40,98.20 L622.90,98.21 L623.40,98.21 L623.90,98.21 L624.40,98.22 L624.90,98.22 L625.40,98.22 L625.90,98.23 L626.40,98.23 L626.90,98.23 L627.40,98.24 L627.90,98.24 L628.40,98.25 L628.90,98.25 L629.40,98.25 L629.90,98.26 L630.40,98.26 L630.90,98.26 L631.40,98.27 L631.90,98.27 L632.40,98.27 L632.90,98.28 L633.40,98.28 L633.90,98.29 L634.40,98.29 L634.90,98.29 L635.40,98.30 L635.90,98.30 L636.40,98.30 L636.90,98.31 L637.40,98.31 L637.90,98.31 L638.40,98.32 L638.90,98.32 L639.40,98.33 L639.90,98.33 L640.40,98.33 L640.90,98.34 L641.40,98.34 L641.90,98.34 L642.40,98.35 L642.90,98.35 L643.40,98.35 L643.90,98.36 L644.40,98.36 L644.90,98.37 L645.40,98.37 L645.90,98.37 L646.40,98.38 L646.90,98.38 L647.40,98.38 L647.90,98.39 L648.40,98.39 L648.90,98.39 L649.40,98.40 L649.90,98.40 L650.40,98.41 L650.90,98.41 L651.40,98.41 L651.90,98.42 L652.40,98.42 L652.90,98.42 L653.40,98.43 L653.90,98.43 L654.40,98.43 L654.90,98.44 L655.40,98.44 L655.90,98.44 L656.40,98.45 L656.90,98.45 L657.40,98.46 L657.90,98.46 L658.40,98.46 L658.90,98.47 L659.40,98.47 L659.90,98.47 L660.40,98.48 L660.90,98.48 L661.40,98.48 L661.90,98.49 L662.40,98.49 L662.90,98.49 L663.40,98.50 L663.90,98.50 L664.40,98.51 L664.90,98.51 L665.40,98.51 L665.90,98.52 L666.40,98.52 L666.90,98.52 L667.40,98.53 L667.90,98.53 L668.40,98.53 L668.90,98.54 L669.40,98.54 L669.90,98.54 L670.40,98.55 L670.90,98.55 L671.40,98.56 L671.90,98.56 L672.40,98.56 L672.90,98.57 L673.40,98.57 L673.90,98.57 L674.40,98.58 L674.90,98.58 L675.40,98.58 L675.90,98.59 L676.40,98.59 L676.90,98.59 L677.40,98.60 L677.90,98.60 L678.40,98.61 L678.90,98.61 L679.40,98.61 L679.90,98.62 L680.40,98.62 L680.90,98.62 L681.40,98.63 L681.90,98.63 L682.40,98.63 L682.90,98.64 L683.40,98.64 L683.90,98.64 L684.40,98.65 L684.90,98.65 L685.40,98.65 L685.90,98.66 L686.40,98.66 L686.90,98.67 L687.40,98.67 L687.90,98.67 L688.40,98.68 L688.90,98.68 L689.40,98.68 L689.90,98.69 L690.40,98.69 L690.90,98.69 L691.40,98.70 L691.90,98.70 L692.40,98.70 L692.90,98.71 L693.40,98.71 L693.90,98.71 L694.40,98.72 L694.90,98.72 L695.40,98.73 L695.90,98.73 L696.40,98.73 L696.90,98.74 L697.40,98.74 L697.90,98.74 L698.40,98.75 L698.90,98.75 L699.40,98.75 L699.90,98.76 L700.40,98.76 L700.90,98.76 L701.40,98.77 L701.90,98.77 L702.40,98.77 L702.90,98.78 L703.40,98.78 L703.90,98.79 L704.40,98.79 L704.90,98.79 L705.40,98.80 L705.90,98.80 L706.40,98.80 L706.90,98.81 L707.40,98.81 L707.90,98.81 L708.40,98.82 L708.90,98.82 L709.40,98.82 L709.90,98.83 L710.40,98.83 L710.90,98.84 L711.40,98.84 L711.90,98.84 L712.40,98.85 L712.90,98.85 L713.40,98.85 L713.90,98.86 L714.40,98.86 L714.90,98.86 L715.40,98.87 L715.90,98.87 L716.40,98.87 L716.90,98.88 L717.40,98.88 L717.90,98.88 L718.40,98.89 L718.90,98.89 L719.40,98.90 L719.90,98.90 L720.40,98.90 L720.90,98.91 L721.40,98.91 L721.90,98.91 L722.40,98.92 L722.90,98.92 L723.40,98.92 L723.90,98.93 L724.40,98.93 L724.90,98.93 L725.40,98.94 L725.90,98.94 L726.40,98.94 L726.90,98.95 L727.40,98.95 L727.90,98.96 L728.40,98.96 L728.90,98.96 L729.40,98.97 L729.90,98.97 L730.40,98.97 L730.90,98.98 L731.40,98.98 L731.90,98.98 L732.40,98.99 L732.90,98.99 L733.40,98.99 L733.90,99.00 L734.40,99.00 L734.90,99.01 L735.40,99.01 L735.90,99.01 L736.40,99.02 L736.90,99.02 L737.40,99.02 L737.90,99.03 L738.40,99.03 L738.90,99.03 L739.40,99.04 L739.90,99.04 L740.40,99.04 L740.90,99.05 L741.40,99.05 L741.90,99.06 L742.40,99.06 L742.90,99.06 L743.40,99.07 L743.90,99.07 L744.40,99.07 L744.90,99.08 L745.40,99.08 L745.90,99.08 L746.40,99.09 L746.90,99.09 L747.40,99.09 L747.90,99.10 L748.40,99.10 L748.90,99.11 L749.40,99.11 L749.90,99.11 L750.40,99.12 L750.90,99.12 L751.40,99.12 L751.90,99.13 L752.40,99.13 L752.90,99.13 L753.40,99.14 L753.90,99.14 L754.40,99.15 L754.90,99.15 L755.40,99.15 L755.90,99.16 L756.40,99.16 L756.90,99.16 L757.40,99.17 L757.90,99.17 L758.40,99.17 L758.90,99.18 L759.40,99.18 L759.90,99.19 L760.40,99.19 L760.90,99.19 L761.40,99.20 L761.90,99.20 L762.40,99.20 L762.90,99.21 L763.40,99.21 L763.90,99.21 L764.40,99.22 L764.50,99.22" fill="none" stroke="#fbe168" stroke-width="1.6" stroke-linejoin="round" shape-rendering="geometricPrecision" clip-path="url(#c82)"/>
<rect x="33" y="259" width="732" height="144" fill="#131313"/>
<rect x="34" y="378" width="730" height="1" fill="#444444"/>
<rect x="34" y="336" width="730" height="1" fill="#444444"/>
<rect x="34" y="294" width="730" height="1" fill="#444444"/>
<rect x="106" y="260" width="1" height="142" fill="#444444"/>
<rect x="179" y="260" width="1" height="142" fill="#444444"/>
<rect x="252" y="260" width="1" height="142" fill="#444444"/>
<rect x="325" y="260" width="1" height="142" fill="#444444"/>
<rect x="399" y="260" width="1" height="142" fill="#444444"/>
<rect x="472" y="260" width="1" height="142" fill="#444444"/>
<rect x="545" y="260" width="1" height="142" fill="#444444"/>
<rect x="618" y="260" width="1" height="142" fill="#444444"/>
<rect x="691" y="260" width="1" height="142" fill="#444444"/>
<rect x="48" y="260" width="1" height="3" fill="#d9d9d9"/>
<rect x="48" y="399" width="1" height="3" fill="#d9d9d9"/>
<rect x="62" y="260" width="1" height="3" fill="#d9d9d9"/>
<rect x="62" y="399" width="1" height="3" fill="#d9d9d9"/>
<rect x="77" y="260" width="1" height="3" fill="#d9d9d9"/>
<rect x="77" y="399" width="1" height="3" fill="#d9d9d9"/>
<rect x="91" y="260" width="1" height="3" fill="#d9d9d9"/>
<rect x="91" y="399" width="1" height="3" fill="#d9d9d9"/>
<rect x="106" y="260" width="1" height="5" fill="#d9d9d9"/>
<rect x="106" y="397" width="1" height="5" fill="#d9d9d9"/>
<rect x="106" y="265" width="1" height="1" fill="#8a8a8a"/>
<rect x="106" y="396" width="1" height="1" fill="#8a8a8a"/>
<rect x="121" y="260" width="1" height="3" fill="#d9d9d9"/>
<rect x="121" y="399" width="1" height="3" fill="#d9d9d9"/>
<rect x="135" y="260" width="1" height="3" fill="#d9d9d9"/>
<rect x="135" y="399" width="1" height="3" fill="#d9d9d9"/>
<rect x="150" y="260" width="1" height="3" fill="#d9d9d9"/>
<rect x="150" y="399" width="1" height="3" fill="#d9d9d9"/>
<rect x="165" y="260" width="1" height="3" fill="#d9d9d9"/>
<rect x="165" y="399" width="1" height="3" fill="#d9d9d9"/>
<rect x="179" y="260" width="1" height="5" fill="#d9d9d9"/>
<rect x="179" y="397" width="1" height="5" fill="#d9d9d9"/>
<rect x="179" y="265" width="1" height="1" fill="#8a8a8a"/>
<rect x="179" y="396" width="1" height="1" fill="#8a8a8a"/>
<rect x="194" y="260" width="1" height="3" fill="#d9d9d9"/>
<rect x="194" y="399" width="1" height="3" fill="#d9d9d9"/>
<rect x="208" y="260" width="1" height="3" fill="#d9d9d9"/>
<rect x="208" y="399" width="1" height="3" fill="#d9d9d9"/>
<rect x="223" y="260" width="1" height="3" fill="#d9d9d9"/>
<rect x="223" y="399" width="1" height="3" fill="#d9d9d9"/>
<rect x="238" y="260" width="1" height="3" fill="#d9d9d9"/>
<rect x="238" y="399" width="1" height="3" fill="#d9d9d9"/>
<rect x="252" y="260" width="1" height="5" fill="#d9d9d9"/>
<rect x="252" y="397" width="1" height="5" fill="#d9d9d9"/>
<rect x="252" y="265" width="1" height="1" fill="#8a8a8a"/>
<rect x="252" y="396" width="1" height="1" fill="#8a8a8a"/>
<rect x="267" y="260" width="1" height="3" fill="#d9d9d9"/>
<rect x="267" y="399" width="1" height="3" fill="#d9d9d9"/>
<rect x="282" y="260" width="1" height="3" fill="#d9d9d9"/>
<rect x="282" y="399" width="1" height="3" fill="#d9d9d9"/>
<rect x="296" y="260" width="1" height="3" fill="#d9d9d9"/>
<rect x="296" y="399" width="1" height="3" fill="#d9d9d9"/>
<rect x="311" y="260" width="1" height="3" fill="#d9d9d9"/>
<rect x="311" y="399" width="1" height="3" fill="#d9d9d9"/>
<rect x="325" y="260" width="1" height="5" fill="#d9d9d9"/>
<rect x="325" y="397" width="1" height="5" fill="#d9d9d9"/>
<rect x="325" y="265" width="1" height="1" fill="#8a8a8a"/>
<rect x="325" y="396" width="1" height="1" fill="#8a8a8a"/>
<rect x="340" y="260" width="1" height="3" fill="#d9d9d9"/>
<rect x="340" y="399" width="1" height="3" fill="#d9d9d9"/>
<rect x="355" y="260" width="1" height="3" fill="#d9d9d9"/>
<rect x="355" y="399" width="1" height="3" fill="#d9d9d9"/>
<rect x="369" y="260" width="1" height="3" fill="#d9d9d9"/>
<rect x="369" y="399" width="1" height="3" fill="#d9d9d9"/>
<rect x="384" y="260" width="1" height="3" fill="#d9d9d9"/>
<rect x="384" y="399" width="1" height="3" fill="#d9d9d9"/>
<rect x="399" y="260" width="1" height="5" fill="#d9d9d9"/>
<rect x="399" y="397" width="1" height="5" fill="#d9d9d9"/>
<rect x="399" y="265" width="1" height="1" fill="#8a8a8a"/>
<rect x="399" y="396" width="1" height="1" fill="#8a8a8a"/>
<rect x="413" y="260" width="1" height="3" fill="#d9d9d9"/>
<rect x="413" y="399" width="1" height="3" fill="#d9d9d9"/>
<rect x="428" y="260" width="1" height="3" fill="#d9d9d9"/>
<rect x="428" y="399" width="1" height="3" fill="#d9d9d9"/>
<rect x="442" y="260" width="1" height="3" fill="#d9d9d9"/>
<rect x="442" y="399" width="1" height="3" fill="#d9d9d9"/>
<rect x="457" y="260" width="1" height="3" fill="#d9d9d9"/>
<rect x="457" y="399" width="1" height="3" fill="#d9d9d9"/>
<rect x="472" y="260" width="1" height="5" fill="#d9d9d9"/>
<rect x="472" y="397" width="1" height="5" fill="#d9d9d9"/>
<rect x="472" y="265" width="1" height="1" fill="#8a8a8a"/>
<rect x="472" y="396" width="1" height="1" fill="#8a8a8a"/>
<rect x="486" y="260" width="1" height="3" fill="#d9d9d9"/>
<rect x="486" y="399" width="1" height="3" fill="#d9d9d9"/>
<rect x="501" y="260" width="1" height="3" fill="#d9d9d9"/>
<rect x="501" y="399" width="1" height="3" fill="#d9d9d9"/>
<rect x="515" y="260" width="1" height="3" fill="#d9d9d9"/>
<rect x="515" y="399" width="1" height="3" fill="#d9d9d9"/>
<rect x="530" y="260" width="1" height="3" fill="#d9d9d9"/>
<rect x="530" y="399" width="1" height="3" fill="#d9d9d9"/>
<rect x="545" y="260" width="1" height="5" fill="#d9d9d9"/>
<rect x="545" y="397" width="1" height="5" fill="#d9d9d9"/>
<rect x="545" y="265" width="1" height="1" fill="#8a8a8a"/>
<rect x="545" y="396" width="1" height="1" fill="#8a8a8a"/>
<rect x="559" y="260" width="1" height="3" fill="#d9d9d9"/>
<rect x="559" y="399" width="1" height="3" fill="#d9d9d9"/>
<rect x="574" y="260" width="1" height="3" fill="#d9d9d9"/>
<rect x="574" y="399" width="1" height="3" fill="#d9d9d9"/>
<rect x="589" y="260" width="1" height="3" fill="#d9d9d9"/>
<rect x="589" y="399" width="1" height="3" fill="#d9d9d9"/>
<rect x="603" y="260" width="1" height="3" fill="#d9d9d9"/>
<rect x="603" y="399" width="1" height="3" fill="#d9d9d9"/>
<rect x="618" y="260" width="1" height="5" fill="#d9d9d9"/>
<rect x="618" y="397" width="1" height="5" fill="#d9d9d9"/>
<rect x="618" y="265" width="1" height="1" fill="#8a8a8a"/>
<rect x="618" y="396" width="1" height="1" fill="#8a8a8a"/>
<rect x="632" y="260" width="1" height="3" fill="#d9d9d9"/>
<rect x="632" y="399" width="1" height="3" fill="#d9d9d9"/>
<rect x="647" y="260" width="1" height="3" fill="#d9d9d9"/>
<rect x="647" y="399" width="1" height="3" fill="#d9d9d9"/>
<rect x="662" y="260" width="1" height="3" fill="#d9d9d9"/>
<rect x="662" y="399" width="1" height="3" fill="#d9d9d9"/>
<rect x="676" y="260" width="1" height="3" fill="#d9d9d9"/>
<rect x="676" y="399" width="1" height="3" fill="#d9d9d9"/>
<rect x="691" y="260" width="1" height="5" fill="#d9d9d9"/>
<rect x="691" y="397" width="1" height="5" fill="#d9d9d9"/>
<rect x="691" y="265" width="1" height="1" fill="#8a8a8a"/>
<rect x="691" y="396" width="1" height="1" fill="#8a8a8a"/>
<rect x="706" y="260" width="1" height="3" fill="#d9d9d9"/>
<rect x="706" y="399" width="1" height="3" fill="#d9d9d9"/>
<rect x="720" y="260" width="1" height="3" fill="#d9d9d9"/>
<rect x="720" y="399" width="1" height="3" fill="#d9d9d9"/>
<rect x="735" y="260" width="1" height="3" fill="#d9d9d9"/>
<rect x="735" y="399" width="1" height="3" fill="#d9d9d9"/>
<rect x="749" y="260" width="1" height="3" fill="#d9d9d9"/>
<rect x="749" y="399" width="1" height="3" fill="#d9d9d9"/>
<rect x="34" y="273" width="3" height="1" fill="#d9d9d9"/>
<rect x="761" y="273" width="3" height="1" fill="#d9d9d9"/>
<rect x="34" y="294" width="5" height="1" fill="#d9d9d9"/>
<rect x="759" y="294" width="5" height="1" fill="#d9d9d9"/>
<rect x="39" y="294" width="1" height="1" fill="#8a8a8a"/>
<rect x="758" y="294" width="1" height="1" fill="#8a8a8a"/>
<rect x="34" y="315" width="3" height="1" fill="#d9d9d9"/>
<rect x="761" y="315" width="3" height="1" fill="#d9d9d9"/>
<rect x="34" y="336" width="5" height="1" fill="#d9d9d9"/>
<rect x="759" y="336" width="5" height="1" fill="#d9d9d9"/>
<rect x="39" y="336" width="1" height="1" fill="#8a8a8a"/>
<rect x="758" y="336" width="1" height="1" fill="#8a8a8a"/>
<rect x="34" y="357" width="3" height="1" fill="#d9d9d9"/>
<rect x="761" y="357" width="3" height="1" fill="#d9d9d9"/>
<rect x="34" y="378" width="5" height="1" fill="#d9d9d9"/>
<rect x="759" y="378" width="5" height="1" fill="#d9d9d9"/>
<rect x="39" y="378" width="1" height="1" fill="#8a8a8a"/>
<rect x="758" y="378" width="1" height="1" fill="#8a8a8a"/>
<rect x="34" y="399" width="3" height="1" fill="#d9d9d9"/>
<rect x="761" y="399" width="3" height="1" fill="#d9d9d9"/>
<rect x="33.5" y="259.5" width="731" height="143" fill="none" stroke="#d9d9d9" stroke-width="1"/>
<clipPath id="c259"><rect x="34" y="260" width="730" height="142"/></clipPath>
<path d="M33.50,377.91 L33.87,378.01 L34.37,378.12 L34.96,378.27 L35.61,378.47 L36.27,378.75 L36.90,379.14 L37.50,379.67 L38.11,380.33 L38.73,381.07 L39.36,381.84 L40.02,382.60 L40.70,383.29 L41.42,383.94 L42.17,384.60 L42.95,385.25 L43.74,385.85 L44.52,386.39 L45.30,386.84 L46.07,387.18 L46.83,387.45 L47.60,387.65 L48.37,387.80 L49.13,387.90 L49.90,387.99 L50.65,388.03 L51.38,388.03 L52.11,387.98 L52.86,387.91 L53.65,387.82 L54.50,387.74 L55.50,387.64 L56.65,387.50 L57.84,387.36 L58.96,387.21 L59.92,387.09 L60.60,387.00 L61.10,386.90 L61.60,386.85 L62.10,386.80 L62.60,386.75 L63.10,386.70 L63.60,386.66 L64.10,386.61 L64.60,386.56 L65.10,386.51 L65.60,386.46 L66.10,386.42 L66.60,386.37 L67.10,386.32 L67.60,386.28 L68.10,386.23 L68.60,386.18 L69.10,386.14 L69.60,386.09 L70.10,386.05 L70.60,386.00 L71.10,385.96 L71.60,385.91 L72.10,385.87 L72.60,385.82 L73.10,385.78 L73.60,385.74 L74.10,385.69 L74.60,385.65 L75.10,385.61 L75.60,385.57 L76.10,385.52 L76.60,385.48 L77.10,385.44 L77.60,385.40 L78.10,385.36 L78.60,385.32 L79.10,385.28 L79.60,385.23 L80.10,385.19 L80.60,385.15 L81.10,385.11 L81.60,385.08 L82.10,385.04 L82.60,385.00 L83.10,384.96 L83.60,384.92 L84.10,384.88 L84.60,384.84 L85.10,384.80 L85.60,384.77 L86.10,384.73 L86.60,384.69 L87.10,384.65 L87.60,384.62 L88.10,384.58 L88.60,384.55 L89.10,384.51 L89.60,384.47 L90.10,384.44 L90.60,384.40 L91.10,384.37 L91.60,384.33 L92.10,384.30 L92.60,384.26 L93.10,384.23 L93.60,384.19 L94.10,384.16 L94.60,384.13 L95.10,384.09 L95.60,384.06 L96.10,384.03 L96.60,383.99 L97.10,383.96 L97.60,383.93 L98.10,383.90 L98.60,383.86 L99.10,383.83 L99.60,383.80 L100.10,383.77 L100.60,383.74 L101.10,383.71 L101.60,383.67 L102.10,383.64 L102.60,383.61 L103.10,383.58 L103.60,383.55 L104.10,383.52 L104.60,383.49 L105.10,383.46 L105.60,383.44 L106.10,383.41 L106.60,383.38 L107.10,383.35 L107.60,383.32 L108.10,383.29 L108.60,383.26 L109.10,383.24 L109.60,383.21 L110.10,383.18 L110.60,383.15 L111.10,383.13 L111.60,383.10 L112.10,383.07 L112.60,383.04 L113.10,383.02 L113.60,382.99 L114.10,382.97 L114.60,382.94 L115.10,382.91 L115.60,382.89 L116.10,382.86 L116.60,382.84 L117.10,382.81 L117.60,382.79 L118.10,382.76 L118.60,382.74 L119.10,382.71 L119.60,382.69 L120.10,382.67 L120.60,382.64 L121.10,382.62 L121.60,382.59 L122.10,382.57 L122.60,382.55 L123.10,382.52 L123.60,382.50 L124.10,382.48 L124.60,382.46 L125.10,382.43 L125.60,382.41 L126.10,382.39 L126.60,382.37 L127.10,382.34 L127.60,382.32 L128.10,382.30 L128.60,382.28 L129.10,382.26 L129.60,382.24 L130.10,382.22 L130.60,382.20 L131.10,382.18 L131.60,382.16 L132.10,382.13 L132.60,382.11 L133.10,382.09 L133.60,382.07 L134.10,382.05 L134.60,382.04 L135.10,382.02 L135.60,382.00 L136.10,381.98 L136.60,381.96 L137.10,381.94 L137.60,381.92 L138.10,381.90 L138.60,381.88 L139.10,381.86 L139.60,381.85 L140.10,381.83 L140.60,381.81 L141.10,381.79 L141.60,381.77 L142.10,381.76 L142.60,381.74 L143.10,381.72 L143.60,381.70 L144.10,381.69 L144.60,381.67 L145.10,381.65 L145.60,381.64 L146.10,381.62 L146.60,381.60 L147.10,381.59 L147.60,381.57 L148.10,381.56 L148.60,381.54 L149.10,381.52 L149.60,381.51 L150.10,381.49 L150.60,381.48 L151.10,381.46 L151.60,381.45 L152.10,381.43 L152.60,381.41 L153.10,381.40 L153.60,381.38 L154.10,381.37 L154.60,381.36 L155.10,381.34 L155.60,381.33 L156.10,381.31 L156.60,381.30 L157.10,381.28 L157.60,381.27 L158.10,381.25 L158.60,381.24 L159.10,381.23 L159.60,381.21 L160.10,381.20 L160.60,381.19 L161.10,381.17 L161.60,381.16 L162.10,381.15 L162.60,381.13 L163.10,381.12 L163.60,381.11 L164.10,381.09 L164.60,381.08 L165.10,381.07 L165.60,381.06 L166.10,381.04 L166.60,381.03 L167.10,381.02 L167.60,381.01 L168.10,380.99 L168.60,380.98 L169.10,380.97 L169.60,380.96 L170.10,380.95 L170.60,380.93 L171.10,380.92 L171.60,380.91 L172.10,380.90 L172.60,380.89 L173.10,380.88 L173.60,380.86 L174.10,380.85 L174.60,380.84 L175.10,380.83 L175.60,380.82 L176.10,380.81 L176.60,380.80 L177.10,380.79 L177.60,380.78 L178.10,380.77 L178.60,380.75 L179.10,380.74 L179.60,380.73 L180.10,380.72 L180.60,380.71 L181.10,380.70 L181.60,380.69 L182.10,380.68 L182.60,380.67 L183.10,380.66 L183.60,380.65 L184.10,380.64 L184.60,380.63 L185.10,380.62 L185.60,380.61 L186.10,380.60 L186.60,380.59 L187.10,380.58 L187.60,380.57 L188.10,380.56 L188.60,380.55 L189.10,380.54 L189.60,380.53 L190.10,380.52 L190.60,380.51 L191.10,380.50 L191.60,380.49 L192.10,380.49 L192.60,380.48 L193.10,380.47 L193.60,380.46 L194.10,380.45 L194.60,380.44 L195.10,380.43 L195.60,380.42 L196.10,380.41 L196.60,380.40 L197.10,380.39 L197.60,380.38 L198.10,380.38 L198.60,380.37 L199.10,380.36 L199.60,380.35 L200.10,380.34 L200.60,380.33 L201.10,380.32 L201.60,380.31 L202.10,380.30 L202.60,380.30 L203.10,380.29 L203.60,380.28 L204.10,380.27 L204.60,380.26 L205.10,380.25 L205.60,380.24 L206.10,380.23 L206.60,380.23 L207.10,380.22 L207.60,380.21 L208.10,380.20 L208.60,380.19 L209.10,380.18 L209.60,380.17 L210.10,380.16 L210.60,380.16 L211.10,380.15 L211.60,380.14 L212.10,380.13 L212.60,380.12 L213.10,380.11 L213.60,380.10 L214.10,380.10 L214.60,380.09 L215.10,380.08 L215.60,380.07 L216.10,380.06 L216.60,380.05 L217.10,380.04 L217.60,380.04 L218.10,380.03 L218.60,380.02 L219.10,380.01 L219.60,380.00 L220.10,379.99 L220.60,379.98 L221.10,379.98 L221.60,379.97 L222.10,379.96 L222.60,379.95 L223.10,379.94 L223.60,379.93 L224.10,379.92 L224.60,379.91 L225.10,379.90 L225.60,379.90 L226.10,379.89 L226.60,379.88 L227.10,379.87 L227.60,379.86 L228.10,379.85 L228.60,379.84 L229.10,379.83 L229.60,379.82 L230.10,379.81 L230.60,379.81 L231.10,379.80 L231.60,379.79 L232.10,379.78 L232.60,379.77 L233.10,379.76 L233.60,379.75 L234.10,379.74 L234.60,379.73 L235.10,379.72 L235.60,379.71 L236.10,379.70 L236.60,379.69 L237.10,379.68 L237.60,379.67 L238.10,379.66 L238.60,379.65 L239.10,379.64 L239.60,379.63 L240.10,379.62 L240.60,379.61 L241.10,379.60 L241.60,379.59 L242.10,379.58 L242.60,379.57 L243.10,379.56 L243.60,379.55 L244.10,379.54 L244.60,379.53 L245.10,379.52 L245.60,379.51 L246.10,379.50 L246.60,379.49 L247.10,379.48 L247.60,379.47 L248.10,379.46 L248.60,379.45 L249.10,379.44 L249.60,379.43 L250.00,379.42 L250.50,379.17 L251.00,379.26 L251.50,379.23 L252.00,379.20 L252.50,379.17 L253.00,379.16 L253.50,379.10 L254.00,378.97 L254.50,378.79 L255.00,378.55 L255.50,378.25 L256.00,377.89 L256.50,377.46 L257.00,376.98 L257.50,376.44 L258.00,375.90 L258.50,375.34 L259.00,374.81 L259.50,374.24 L260.00,373.66 L260.50,373.09 L261.00,372.51 L261.50,371.92 L262.00,371.33 L262.50,370.74 L263.00,370.14 L263.50,369.54 L264.00,368.94 L264.50,368.34 L265.00,367.73 L265.50,367.12 L266.00,366.52 L266.50,365.91 L267.00,365.30 L267.50,364.69 L268.00,364.08 L268.50,363.47 L269.00,362.86 L269.50,362.25 L270.00,361.64 L270.50,361.03 L271.00,360.43 L271.50,359.82 L272.00,359.22 L272.50,358.62 L273.00,358.02 L273.50,357.42 L274.00,356.82 L274.50,356.23 L275.00,355.64 L275.50,355.05 L276.00,354.46 L276.50,353.87 L277.00,353.29 L277.50,352.71 L278.00,352.13 L278.50,351.56 L279.00,350.99 L279.50,350.42 L280.00,349.85 L280.50,349.28 L281.00,348.72 L281.50,348.16 L282.00,347.60 L282.50,347.04 L283.00,346.49 L283.50,345.94 L284.00,345.40 L284.50,344.85 L285.00,344.32 L285.50,343.78 L286.00,343.25 L286.50,342.72 L287.00,342.19 L287.50,341.67 L288.00,341.15 L288.50,340.63 L289.00,340.12 L289.50,339.61 L290.00,339.11 L290.50,338.60 L291.00,338.10 L291.50,337.61 L292.00,337.12 L292.50,336.63 L293.00,336.14 L293.50,335.66 L294.00,335.18 L294.50,334.70 L295.00,334.23 L295.50,333.76 L296.00,333.30 L296.50,332.84 L297.00,332.38 L297.50,331.92 L298.00,331.47 L298.50,331.02 L299.00,330.58 L299.50,330.13 L300.00,329.69 L300.50,329.26 L301.00,328.83 L301.50,328.40 L302.00,327.97 L302.50,327.55 L303.00,327.13 L303.50,326.71 L304.00,326.30 L304.50,325.88 L305.00,325.48 L305.50,325.07 L306.00,324.67 L306.50,324.27 L307.00,323.88 L307.50,323.48 L308.00,323.09 L308.50,322.71 L309.00,322.32 L309.50,321.94 L310.00,321.56 L310.50,321.19 L311.00,320.82 L311.50,320.45 L312.00,320.08 L312.50,319.72 L313.00,319.36 L313.50,319.00 L314.00,318.64 L314.50,318.29 L315.00,317.94 L315.50,317.59 L316.00,317.25 L316.50,316.91 L317.00,316.57 L317.50,316.23 L318.00,315.90 L318.50,315.57 L319.00,315.24 L319.50,314.91 L320.00,314.59 L320.50,314.26 L321.00,313.95 L321.50,313.63 L322.00,313.31 L322.50,313.00 L323.00,312.69 L323.50,312.39 L324.00,312.08 L324.50,311.78 L325.00,311.48 L325.50,311.18 L326.00,310.89 L326.50,310.60 L327.00,310.31 L327.50,310.02 L328.00,309.73 L328.50,309.45 L329.00,309.17 L329.50,308.89 L330.00,308.61 L330.50,308.33 L331.00,308.06 L331.50,307.79 L332.00,307.52 L332.50,307.26 L333.00,306.99 L333.50,306.73 L334.00,306.47 L334.50,306.21 L335.00,305.95 L335.50,305.70 L336.00,305.45 L336.50,305.20 L337.00,304.95 L337.50,304.70 L338.00,304.46 L338.50,304.21 L339.00,303.97 L339.50,303.73 L340.00,303.50 L340.50,303.26 L341.00,303.03 L341.50,302.80 L342.00,302.57 L342.50,302.34 L343.00,302.11 L343.50,301.89 L344.00,301.67 L344.50,301.45 L345.00,301.23 L345.50,301.01 L346.00,300.79 L346.50,300.58 L347.00,300.37 L347.50,300.16 L348.00,299.95 L348.50,299.74 L349.00,299.53 L349.50,299.33 L350.00,299.13 L350.50,298.93 L351.00,298.73 L351.50,298.53 L352.00,298.33 L352.50,298.14 L353.00,297.95 L353.50,297.76 L354.00,297.57 L354.50,297.38 L355.00,297.19 L355.50,297.01 L356.00,296.82 L356.50,296.64 L357.00,296.46 L357.50,296.28 L358.00,296.10 L358.50,295.92 L359.00,295.75 L359.50,295.57 L360.00,295.40 L360.50,295.23 L361.00,295.06 L361.50,294.89 L362.00,294.73 L362.50,294.56 L363.00,294.39 L363.50,294.23 L364.00,294.07 L364.50,293.91 L365.00,293.75 L365.50,293.59 L366.00,293.43 L366.50,293.28 L367.00,293.12 L367.50,292.97 L368.00,292.82 L368.50,292.67 L369.00,292.52 L369.50,292.37 L370.00,292.22 L370.50,292.07 L371.00,291.93 L371.50,291.78 L372.00,291.64 L372.50,291.50 L373.00,291.36 L373.50,291.22 L374.00,291.08 L374.50,290.94 L375.00,290.81 L375.50,290.67 L376.00,290.54 L376.50,290.40 L377.00,290.27 L377.50,290.14 L378.00,290.01 L378.50,289.88 L379.00,289.75 L379.50,289.63 L380.00,289.50 L380.50,289.37 L381.00,289.25 L381.50,289.13 L382.00,289.00 L382.50,288.88 L383.00,288.76 L383.50,288.64 L384.00,288.52 L384.50,288.41 L385.00,288.29 L385.50,288.17 L386.00,288.06 L386.50,287.95 L387.00,287.83 L387.50,287.72 L388.00,287.61 L388.50,287.50 L389.00,287.39 L389.50,287.28 L390.00,287.17 L390.50,287.07 L391.00,286.96 L391.50,286.85 L392.00,286.75 L392.50,286.65 L393.00,286.54 L393.50,286.44 L394.00,286.34 L394.50,286.24 L395.00,286.14 L395.50,286.04 L396.00,285.94 L396.50,285.84 L397.00,285.75 L397.50,285.65 L398.00,285.56 L398.50,285.46 L399.00,285.37 L399.50,285.27 L400.00,285.18 L400.50,285.09 L401.00,285.00 L401.50,284.91 L402.00,284.82 L402.50,284.73 L403.00,284.64 L403.50,284.56 L404.00,284.47 L404.50,284.38 L405.00,284.30 L405.50,284.21 L406.00,284.13 L406.50,284.05 L407.00,283.96 L407.50,283.88 L408.00,283.80 L408.50,283.72 L409.00,283.64 L409.50,283.56 L410.00,283.48 L410.50,283.40 L411.00,283.32 L411.50,283.25 L412.00,283.17 L412.50,283.09 L413.00,283.02 L413.50,282.94 L414.00,282.87 L414.50,282.80 L415.00,282.72 L415.50,282.65 L416.00,282.58 L416.50,282.51 L417.00,282.44 L417.50,282.37 L418.00,282.30 L418.50,282.23 L419.00,282.16 L419.50,282.09 L420.00,282.02 L420.50,281.96 L421.00,281.89 L421.50,281.82 L422.00,281.76 L422.50,281.69 L423.00,281.63 L423.50,281.56 L424.00,281.50 L424.50,281.44 L425.00,281.37 L425.50,281.31 L426.00,281.25 L426.50,281.19 L427.00,281.13 L427.50,281.07 L428.00,281.01 L428.50,280.95 L429.00,280.89 L429.50,280.83 L430.00,280.77 L430.50,280.72 L431.00,280.66 L431.50,280.60 L432.00,280.55 L432.50,280.49 L433.00,280.44 L433.50,280.38 L434.00,280.33 L434.50,280.27 L435.00,280.22 L435.50,280.17 L436.00,280.11 L436.50,280.06 L437.00,280.01 L437.50,279.96 L438.00,279.91 L438.50,279.86 L439.00,279.81 L439.50,279.76 L440.00,279.71 L440.50,279.66 L441.00,279.61 L441.50,279.56 L442.00,279.51 L442.50,279.46 L443.00,279.42 L443.50,279.37 L444.00,279.32 L444.50,279.28 L445.00,279.23 L445.50,279.18 L446.00,279.14 L446.50,279.09 L447.00,279.05 L447.50,279.01 L448.00,278.96 L448.50,278.92 L449.00,278.88 L449.50,278.83 L450.00,278.79 L450.50,278.75 L451.00,278.71 L451.50,278.66 L452.00,278.62 L452.50,278.58 L453.00,278.54 L453.50,278.50 L454.00,278.46 L454.50,278.42 L455.00,278.38 L455.50,278.34 L456.00,278.30 L456.50,278.27 L457.00,278.23 L457.50,278.19 L458.00,278.15 L458.50,278.11 L459.00,278.08 L459.50,278.04 L460.00,278.00 L460.50,277.97 L461.00,277.93 L461.50,277.90 L462.00,277.86 L462.50,277.83 L463.00,277.79 L463.50,277.76 L464.00,277.72 L464.50,277.69 L465.00,277.65 L465.50,277.62 L466.00,277.59 L466.50,277.55 L467.00,277.52 L467.50,277.49 L468.00,277.46 L468.50,277.43 L469.00,277.39 L469.50,277.36 L470.00,277.33 L470.50,277.30 L471.00,277.27 L471.50,277.24 L472.00,277.21 L472.50,277.18 L473.00,277.15 L473.50,277.12 L474.00,277.09 L474.50,277.06 L475.00,277.03 L475.50,277.00 L476.00,276.97 L476.50,276.95 L477.00,276.92 L477.50,276.89 L478.00,276.86 L478.50,276.83 L479.00,276.81 L479.50,276.78 L480.00,276.75 L480.50,276.73 L481.00,276.70 L481.50,276.67 L482.00,276.65 L482.50,276.62 L483.00,276.60 L483.50,276.57 L484.00,276.55 L484.50,276.52 L485.00,276.50 L485.50,276.47 L486.00,276.45 L486.50,276.42 L487.00,276.40 L487.50,276.37 L488.00,276.35 L488.50,276.33 L489.00,276.30 L489.50,276.28 L490.00,276.26 L490.50,276.23 L491.00,276.21 L491.50,276.19 L492.00,276.17 L492.50,276.14 L493.00,276.12 L493.50,276.10 L494.00,276.08 L494.50,276.06 L495.00,276.04 L495.50,276.01 L496.00,275.99 L496.50,275.97 L497.00,275.95 L497.50,275.93 L498.00,275.91 L498.50,275.89 L499.00,275.87 L499.50,275.85 L500.00,275.83 L500.50,275.81 L501.00,275.79 L501.50,275.77 L502.00,275.76 L502.50,275.74 L503.00,275.72 L503.50,275.70 L504.00,275.68 L504.50,275.66 L505.00,275.65 L505.50,275.63 L506.00,275.61 L506.50,275.59 L507.00,275.57 L507.50,275.56 L508.00,275.54 L508.50,275.52 L509.00,275.51 L509.50,275.49 L510.00,275.47 L510.50,275.46 L511.00,275.44 L511.50,275.42 L512.00,275.41 L512.50,275.39 L513.00,275.38 L513.50,275.36 L514.00,275.34 L514.50,275.33 L515.00,275.31 L515.50,275.30 L516.00,275.28 L516.50,275.27 L517.00,275.25 L517.50,275.24 L518.00,275.22 L518.50,275.21 L519.00,275.20 L519.50,275.18 L520.00,275.17 L520.50,275.15 L521.00,275.14 L521.50,275.12 L522.00,275.11 L522.50,275.10 L523.00,275.08 L523.50,275.07 L524.00,275.06 L524.50,275.04 L525.00,275.03 L525.50,275.02 L526.00,275.01 L526.50,274.99 L527.00,274.98 L527.50,274.97 L528.00,274.95 L528.50,274.94 L529.00,274.93 L529.50,274.92 L530.00,274.91 L530.50,274.89 L531.00,274.88 L531.50,274.87 L532.00,274.86 L532.50,274.85 L533.00,274.83 L533.50,274.82 L534.00,274.81 L534.50,274.80 L535.00,274.79 L535.50,274.78 L536.00,274.77 L536.50,274.76 L537.00,274.75 L537.50,274.74 L538.00,274.72 L538.50,274.71 L539.00,274.70 L539.50,274.69 L540.00,274.68 L540.50,274.67 L541.00,274.66 L541.50,274.65 L542.00,274.64 L542.50,274.63 L543.00,274.62 L543.50,274.61 L544.00,274.60 L544.50,274.59 L545.00,274.58 L545.50,274.58 L546.00,274.57 L546.50,274.56 L547.00,274.55 L547.50,274.54 L548.00,274.53 L548.50,274.52 L549.00,274.51 L549.50,274.50 L550.00,274.49 L550.50,274.49 L551.00,274.48 L551.50,274.47 L552.00,274.46 L552.50,274.45 L553.00,274.44 L553.50,274.43 L554.00,274.43 L554.50,274.42 L555.00,274.41 L555.50,274.40 L556.00,274.39 L556.50,274.39 L557.00,274.38 L557.50,274.37 L558.00,274.36 L558.50,274.36 L559.00,274.35 L559.50,274.34 L560.00,274.33 L560.50,274.33 L561.00,274.32 L561.50,274.31 L562.00,274.31 L562.50,274.30 L563.00,274.29 L563.50,274.28 L564.00,274.28 L564.50,274.27 L565.00,274.26 L565.50,274.26 L566.00,274.25 L566.50,274.24 L567.00,274.24 L567.50,274.23 L568.00,274.23 L568.50,274.22 L569.00,274.21 L569.50,274.21 L570.00,274.20 L570.50,274.19 L571.00,274.19 L571.50,274.18 L572.00,274.18 L572.50,274.17 L573.00,274.16 L573.50,274.16 L574.00,274.15 L574.50,274.15 L575.00,274.14 L575.50,274.14 L576.00,274.13 L576.50,274.13 L577.00,274.12 L577.50,274.12 L578.00,274.11 L578.50,274.10 L579.00,274.10 L579.50,274.09 L580.00,274.09 L580.50,274.08 L581.00,274.08 L581.50,274.07 L582.00,274.07 L582.50,274.06 L583.00,274.06 L583.50,274.06 L584.00,274.05 L584.50,274.05 L585.00,274.04 L585.50,274.04 L586.00,274.03 L586.50,274.03 L587.00,274.02 L587.50,274.02 L588.00,274.01 L588.50,274.01 L589.00,274.01 L589.50,274.00 L590.00,274.00 L590.50,273.99 L591.00,273.99 L591.50,273.99 L592.00,273.98 L592.50,273.98 L593.00,273.97 L593.50,273.97 L594.00,273.97 L594.50,273.96 L595.00,273.96 L595.50,273.96 L596.00,273.95 L596.50,273.95 L597.00,273.94 L597.50,273.94 L598.00,273.94 L598.50,273.93 L599.00,273.93 L599.50,273.93 L600.00,273.92 L600.50,273.92 L601.00,273.92 L601.50,273.91 L602.00,273.91 L602.50,273.91 L603.00,273.91 L603.50,273.90 L604.00,273.90 L604.50,273.90 L605.00,273.89 L605.50,273.89 L606.00,273.89 L606.50,273.88 L607.00,273.88 L607.50,273.88 L608.00,273.88 L608.50,273.87 L609.00,273.87 L609.50,273.87 L610.00,273.87 L610.50,273.86 L611.00,273.86 L611.50,273.86 L612.00,273.86 L612.50,273.85 L613.00,273.85 L613.50,273.85 L614.00,273.85 L614.50,273.85 L615.00,273.84 L615.50,273.84 L616.00,273.84 L616.50,273.84 L617.00,273.83 L617.50,273.83 L618.00,273.83 L618.50,273.83 L619.00,273.83 L619.50,273.83 L620.00,273.82 L620.50,273.82 L621.00,273.82 L621.50,273.82 L622.00,273.82 L622.50,273.81 L623.00,273.81 L623.50,273.81 L624.00,273.81 L624.50,273.81 L625.00,273.81 L625.50,273.81 L626.00,273.80 L626.50,273.80 L627.00,273.80 L627.50,273.80 L628.00,273.80 L628.50,273.80 L629.00,273.80 L629.50,273.79 L630.00,273.79 L630.50,273.79 L631.00,273.79 L631.50,273.79 L632.00,273.79 L632.50,273.79 L633.00,273.79 L633.50,273.79 L634.00,273.78 L634.50,273.78 L635.00,273.78 L635.50,273.78 L636.00,273.78 L636.50,273.78 L637.00,273.78 L637.50,273.78 L638.00,273.78 L638.50,273.78 L639.00,273.78 L639.50,273.78 L640.00,273.77 L640.50,273.77 L641.00,273.77 L641.50,273.77 L642.00,273.77 L642.50,273.77 L643.00,273.77 L643.50,273.77 L644.00,273.77 L644.50,273.77 L645.00,273.77 L645.50,273.77 L646.00,273.77 L646.50,273.77 L647.00,273.77 L647.50,273.77 L648.00,273.77 L648.50,273.77 L649.00,273.77 L649.50,273.77 L650.00,273.77 L650.50,273.77 L651.00,273.77 L651.50,273.77 L652.00,273.77 L652.50,273.77 L653.00,273.77 L653.50,273.77 L654.00,273.77 L654.50,273.77 L655.00,273.77 L655.50,273.77 L656.00,273.77 L656.50,273.77 L657.00,273.77 L657.50,273.77 L658.00,273.77 L658.50,273.77 L659.00,273.77 L659.50,273.77 L660.00,273.77 L660.50,273.77 L661.00,273.77 L661.50,273.77 L662.00,273.77 L662.50,273.77 L663.00,273.78 L663.50,273.78 L664.00,273.78 L664.50,273.78 L665.00,273.78 L665.50,273.78 L666.00,273.78 L666.50,273.78 L667.00,273.78 L667.50,273.78 L668.00,273.78 L668.50,273.78 L669.00,273.78 L669.50,273.78 L670.00,273.79 L670.50,273.79 L671.00,273.79 L671.50,273.79 L672.00,273.79 L672.50,273.79 L673.00,273.79 L673.50,273.79 L674.00,273.79 L674.50,273.80 L675.00,273.80 L675.50,273.80 L676.00,273.80 L676.50,273.80 L677.00,273.80 L677.50,273.80 L678.00,273.80 L678.50,273.80 L679.00,273.81 L679.50,273.81 L680.00,273.81 L680.50,273.81 L681.00,273.81 L681.50,273.81 L682.00,273.81 L682.50,273.82 L683.00,273.82 L683.50,273.82 L684.00,273.82 L684.50,273.82 L685.00,273.82 L685.50,273.83 L686.00,273.83 L686.50,273.83 L687.00,273.83 L687.50,273.83 L688.00,273.83 L688.50,273.84 L689.00,273.84 L689.50,273.84 L690.00,273.84 L690.50,273.84 L691.00,273.85 L691.50,273.85 L692.00,273.85 L692.50,273.85 L693.00,273.85 L693.50,273.86 L694.00,273.86 L694.50,273.86 L695.00,273.86 L695.50,273.86 L696.00,273.87 L696.50,273.87 L697.00,273.87 L697.50,273.87 L698.00,273.87 L698.50,273.88 L699.00,273.88 L699.50,273.88 L700.00,273.88 L700.50,273.89 L701.00,273.89 L701.50,273.89 L702.00,273.89 L702.50,273.90 L703.00,273.90 L703.50,273.90 L704.00,273.90 L704.50,273.90 L705.00,273.91 L705.50,273.91 L706.00,273.91 L706.50,273.92 L707.00,273.92 L707.50,273.92 L708.00,273.92 L708.50,273.93 L709.00,273.93 L709.50,273.93 L710.00,273.93 L710.50,273.94 L711.00,273.94 L711.50,273.94 L712.00,273.94 L712.50,273.95 L713.00,273.95 L713.50,273.95 L714.00,273.96 L714.50,273.96 L715.00,273.96 L715.50,273.97 L716.00,273.97 L716.50,273.97 L717.00,273.97 L717.50,273.98 L718.00,273.98 L718.50,273.98 L719.00,273.99 L719.50,273.99 L720.00,273.99 L720.50,274.00 L721.00,274.00 L721.50,274.00 L722.00,274.01 L722.50,274.01 L723.00,274.01 L723.50,274.02 L724.00,274.02 L724.50,274.02 L725.00,274.03 L725.50,274.03 L726.00,274.03 L726.50,274.04 L727.00,274.04 L727.50,274.04 L728.00,274.05 L728.50,274.05 L729.00,274.05 L729.50,274.06 L730.00,274.06 L730.50,274.06 L731.00,274.07 L731.50,274.07 L732.00,274.08 L732.50,274.08 L733.00,274.08 L733.50,274.09 L734.00,274.09 L734.50,274.09 L735.00,274.10 L735.50,274.10 L736.00,274.11 L736.50,274.11 L737.00,274.11 L737.50,274.12 L738.00,274.12 L738.50,274.13 L739.00,274.13 L739.50,274.13 L740.00,274.14 L740.50,274.14 L741.00,274.15 L741.50,274.15 L742.00,274.15 L742.50,274.16 L743.00,274.16 L743.50,274.17 L744.00,274.17 L744.50,274.17 L745.00,274.18 L745.50,274.18 L746.00,274.19 L746.50,274.19 L747.00,274.20 L747.50,274.20 L748.00,274.20 L748.50,274.21 L749.00,274.21 L749.50,274.22 L750.00,274.22 L750.50,274.23 L751.00,274.23 L751.50,274.24 L752.00,274.24 L752.50,274.24 L753.00,274.25 L753.50,274.25 L754.00,274.26 L754.50,274.26 L755.00,274.27 L755.50,274.27 L756.00,274.28 L756.50,274.28 L757.00,274.29 L757.50,274.29 L758.00,274.30 L758.50,274.30 L759.00,274.31 L759.50,274.31 L760.00,274.32 L760.50,274.32 L761.00,274.33 L761.50,274.33 L762.00,274.34 L762.50,274.34 L763.00,274.35 L763.50,274.35 L764.00,274.36 L764.50,274.36" fill="none" stroke="#fbe168" stroke-width="1.6" stroke-linejoin="round" shape-rendering="geometricPrecision" clip-path="url(#c259)"/>
<rect x="33" y="436" width="732" height="127" fill="#131313"/>
<rect x="34" y="540" width="730" height="1" fill="#444444"/>
<rect x="34" y="504" width="730" height="1" fill="#444444"/>
<rect x="34" y="468" width="730" height="1" fill="#444444"/>
<rect x="106" y="437" width="1" height="125" fill="#444444"/>
<rect x="179" y="437" width="1" height="125" fill="#444444"/>
<rect x="252" y="437" width="1" height="125" fill="#444444"/>
<rect x="325" y="437" width="1" height="125" fill="#444444"/>
<rect x="399" y="437" width="1" height="125" fill="#444444"/>
<rect x="472" y="437" width="1" height="125" fill="#444444"/>
<rect x="545" y="437" width="1" height="125" fill="#444444"/>
<rect x="618" y="437" width="1" height="125" fill="#444444"/>
<rect x="691" y="437" width="1" height="125" fill="#444444"/>
<rect x="48" y="437" width="1" height="3" fill="#d9d9d9"/>
<rect x="48" y="559" width="1" height="3" fill="#d9d9d9"/>
<rect x="62" y="437" width="1" height="3" fill="#d9d9d9"/>
<rect x="62" y="559" width="1" height="3" fill="#d9d9d9"/>
<rect x="77" y="437" width="1" height="3" fill="#d9d9d9"/>
<rect x="77" y="559" width="1" height="3" fill="#d9d9d9"/>
<rect x="91" y="437" width="1" height="3" fill="#d9d9d9"/>
<rect x="91" y="559" width="1" height="3" fill="#d9d9d9"/>
<rect x="106" y="437" width="1" height="5" fill="#d9d9d9"/>
<rect x="106" y="557" width="1" height="5" fill="#d9d9d9"/>
<rect x="106" y="442" width="1" height="1" fill="#8a8a8a"/>
<rect x="106" y="556" width="1" height="1" fill="#8a8a8a"/>
<rect x="121" y="437" width="1" height="3" fill="#d9d9d9"/>
<rect x="121" y="559" width="1" height="3" fill="#d9d9d9"/>
<rect x="135" y="437" width="1" height="3" fill="#d9d9d9"/>
<rect x="135" y="559" width="1" height="3" fill="#d9d9d9"/>
<rect x="150" y="437" width="1" height="3" fill="#d9d9d9"/>
<rect x="150" y="559" width="1" height="3" fill="#d9d9d9"/>
<rect x="165" y="437" width="1" height="3" fill="#d9d9d9"/>
<rect x="165" y="559" width="1" height="3" fill="#d9d9d9"/>
<rect x="179" y="437" width="1" height="5" fill="#d9d9d9"/>
<rect x="179" y="557" width="1" height="5" fill="#d9d9d9"/>
<rect x="179" y="442" width="1" height="1" fill="#8a8a8a"/>
<rect x="179" y="556" width="1" height="1" fill="#8a8a8a"/>
<rect x="194" y="437" width="1" height="3" fill="#d9d9d9"/>
<rect x="194" y="559" width="1" height="3" fill="#d9d9d9"/>
<rect x="208" y="437" width="1" height="3" fill="#d9d9d9"/>
<rect x="208" y="559" width="1" height="3" fill="#d9d9d9"/>
<rect x="223" y="437" width="1" height="3" fill="#d9d9d9"/>
<rect x="223" y="559" width="1" height="3" fill="#d9d9d9"/>
<rect x="238" y="437" width="1" height="3" fill="#d9d9d9"/>
<rect x="238" y="559" width="1" height="3" fill="#d9d9d9"/>
<rect x="252" y="437" width="1" height="5" fill="#d9d9d9"/>
<rect x="252" y="557" width="1" height="5" fill="#d9d9d9"/>
<rect x="252" y="442" width="1" height="1" fill="#8a8a8a"/>
<rect x="252" y="556" width="1" height="1" fill="#8a8a8a"/>
<rect x="267" y="437" width="1" height="3" fill="#d9d9d9"/>
<rect x="267" y="559" width="1" height="3" fill="#d9d9d9"/>
<rect x="282" y="437" width="1" height="3" fill="#d9d9d9"/>
<rect x="282" y="559" width="1" height="3" fill="#d9d9d9"/>
<rect x="296" y="437" width="1" height="3" fill="#d9d9d9"/>
<rect x="296" y="559" width="1" height="3" fill="#d9d9d9"/>
<rect x="311" y="437" width="1" height="3" fill="#d9d9d9"/>
<rect x="311" y="559" width="1" height="3" fill="#d9d9d9"/>
<rect x="325" y="437" width="1" height="5" fill="#d9d9d9"/>
<rect x="325" y="557" width="1" height="5" fill="#d9d9d9"/>
<rect x="325" y="442" width="1" height="1" fill="#8a8a8a"/>
<rect x="325" y="556" width="1" height="1" fill="#8a8a8a"/>
<rect x="340" y="437" width="1" height="3" fill="#d9d9d9"/>
<rect x="340" y="559" width="1" height="3" fill="#d9d9d9"/>
<rect x="355" y="437" width="1" height="3" fill="#d9d9d9"/>
<rect x="355" y="559" width="1" height="3" fill="#d9d9d9"/>
<rect x="369" y="437" width="1" height="3" fill="#d9d9d9"/>
<rect x="369" y="559" width="1" height="3" fill="#d9d9d9"/>
<rect x="384" y="437" width="1" height="3" fill="#d9d9d9"/>
<rect x="384" y="559" width="1" height="3" fill="#d9d9d9"/>
<rect x="399" y="437" width="1" height="5" fill="#d9d9d9"/>
<rect x="399" y="557" width="1" height="5" fill="#d9d9d9"/>
<rect x="399" y="442" width="1" height="1" fill="#8a8a8a"/>
<rect x="399" y="556" width="1" height="1" fill="#8a8a8a"/>
<rect x="413" y="437" width="1" height="3" fill="#d9d9d9"/>
<rect x="413" y="559" width="1" height="3" fill="#d9d9d9"/>
<rect x="428" y="437" width="1" height="3" fill="#d9d9d9"/>
<rect x="428" y="559" width="1" height="3" fill="#d9d9d9"/>
<rect x="442" y="437" width="1" height="3" fill="#d9d9d9"/>
<rect x="442" y="559" width="1" height="3" fill="#d9d9d9"/>
<rect x="457" y="437" width="1" height="3" fill="#d9d9d9"/>
<rect x="457" y="559" width="1" height="3" fill="#d9d9d9"/>
<rect x="472" y="437" width="1" height="5" fill="#d9d9d9"/>
<rect x="472" y="557" width="1" height="5" fill="#d9d9d9"/>
<rect x="472" y="442" width="1" height="1" fill="#8a8a8a"/>
<rect x="472" y="556" width="1" height="1" fill="#8a8a8a"/>
<rect x="486" y="437" width="1" height="3" fill="#d9d9d9"/>
<rect x="486" y="559" width="1" height="3" fill="#d9d9d9"/>
<rect x="501" y="437" width="1" height="3" fill="#d9d9d9"/>
<rect x="501" y="559" width="1" height="3" fill="#d9d9d9"/>
<rect x="515" y="437" width="1" height="3" fill="#d9d9d9"/>
<rect x="515" y="559" width="1" height="3" fill="#d9d9d9"/>
<rect x="530" y="437" width="1" height="3" fill="#d9d9d9"/>
<rect x="530" y="559" width="1" height="3" fill="#d9d9d9"/>
<rect x="545" y="437" width="1" height="5" fill="#d9d9d9"/>
<rect x="545" y="557" width="1" height="5" fill="#d9d9d9"/>
<rect x="545" y="442" width="1" height="1" fill="#8a8a8a"/>
<rect x="545" y="556" width="1" height="1" fill="#8a8a8a"/>
<rect x="559" y="437" width="1" height="3" fill="#d9d9d9"/>
<rect x="559" y="559" width="1" height="3" fill="#d9d9d9"/>
<rect x="574" y="437" width="1" height="3" fill="#d9d9d9"/>
<rect x="574" y="559" width="1" height="3" fill="#d9d9d9"/>
<rect x="589" y="437" width="1" height="3" fill="#d9d9d9"/>
<rect x="589" y="559" width="1" height="3" fill="#d9d9d9"/>
<rect x="603" y="437" width="1" height="3" fill="#d9d9d9"/>
<rect x="603" y="559" width="1" height="3" fill="#d9d9d9"/>
<rect x="618" y="437" width="1" height="5" fill="#d9d9d9"/>
<rect x="618" y="557" width="1" height="5" fill="#d9d9d9"/>
<rect x="618" y="442" width="1" height="1" fill="#8a8a8a"/>
<rect x="618" y="556" width="1" height="1" fill="#8a8a8a"/>
<rect x="632" y="437" width="1" height="3" fill="#d9d9d9"/>
<rect x="632" y="559" width="1" height="3" fill="#d9d9d9"/>
<rect x="647" y="437" width="1" height="3" fill="#d9d9d9"/>
<rect x="647" y="559" width="1" height="3" fill="#d9d9d9"/>
<rect x="662" y="437" width="1" height="3" fill="#d9d9d9"/>
<rect x="662" y="559" width="1" height="3" fill="#d9d9d9"/>
<rect x="676" y="437" width="1" height="3" fill="#d9d9d9"/>
<rect x="676" y="559" width="1" height="3" fill="#d9d9d9"/>
<rect x="691" y="437" width="1" height="5" fill="#d9d9d9"/>
<rect x="691" y="557" width="1" height="5" fill="#d9d9d9"/>
<rect x="691" y="442" width="1" height="1" fill="#8a8a8a"/>
<rect x="691" y="556" width="1" height="1" fill="#8a8a8a"/>
<rect x="706" y="437" width="1" height="3" fill="#d9d9d9"/>
<rect x="706" y="559" width="1" height="3" fill="#d9d9d9"/>
<rect x="720" y="437" width="1" height="3" fill="#d9d9d9"/>
<rect x="720" y="559" width="1" height="3" fill="#d9d9d9"/>
<rect x="735" y="437" width="1" height="3" fill="#d9d9d9"/>
<rect x="735" y="559" width="1" height="3" fill="#d9d9d9"/>
<rect x="749" y="437" width="1" height="3" fill="#d9d9d9"/>
<rect x="749" y="559" width="1" height="3" fill="#d9d9d9"/>
<rect x="34" y="449" width="3" height="1" fill="#d9d9d9"/>
<rect x="761" y="449" width="3" height="1" fill="#d9d9d9"/>
<rect x="34" y="468" width="5" height="1" fill="#d9d9d9"/>
<rect x="759" y="468" width="5" height="1" fill="#d9d9d9"/>
<rect x="39" y="468" width="1" height="1" fill="#8a8a8a"/>
<rect x="758" y="468" width="1" height="1" fill="#8a8a8a"/>
<rect x="34" y="486" width="3" height="1" fill="#d9d9d9"/>
<rect x="761" y="486" width="3" height="1" fill="#d9d9d9"/>
<rect x="34" y="504" width="5" height="1" fill="#d9d9d9"/>
<rect x="759" y="504" width="5" height="1" fill="#d9d9d9"/>
<rect x="39" y="504" width="1" height="1" fill="#8a8a8a"/>
<rect x="758" y="504" width="1" height="1" fill="#8a8a8a"/>
<rect x="34" y="522" width="3" height="1" fill="#d9d9d9"/>
<rect x="761" y="522" width="3" height="1" fill="#d9d9d9"/>
<rect x="34" y="540" width="5" height="1" fill="#d9d9d9"/>
<rect x="759" y="540" width="5" height="1" fill="#d9d9d9"/>
<rect x="39" y="540" width="1" height="1" fill="#8a8a8a"/>
<rect x="758" y="540" width="1" height="1" fill="#8a8a8a"/>
<rect x="34" y="558" width="3" height="1" fill="#d9d9d9"/>
<rect x="761" y="558" width="3" height="1" fill="#d9d9d9"/>
<rect x="33.5" y="436.5" width="731" height="126" fill="none" stroke="#d9d9d9" stroke-width="1"/>
<clipPath id="c436"><rect x="34" y="437" width="730" height="125"/></clipPath>
<path d="M33.50,540.80 L33.70,541.37 L33.98,542.18 L34.31,543.13 L34.67,544.13 L35.04,545.08 L35.40,545.90 L35.75,546.65 L36.11,547.42 L36.47,548.14 L36.85,548.75 L37.22,549.19 L37.60,549.40 L37.98,549.35 L38.36,549.09 L38.74,548.65 L39.13,548.08 L39.52,547.42 L39.90,546.70 L40.28,545.85 L40.67,544.82 L41.05,543.70 L41.43,542.56 L41.82,541.50 L42.20,540.60 L42.58,539.85 L42.95,539.19 L43.33,538.60 L43.70,538.07 L44.09,537.61 L44.50,537.20 L44.93,536.85 L45.37,536.57 L45.83,536.34 L46.29,536.17 L46.75,536.06 L47.20,536.00 L47.65,536.01 L48.09,536.08 L48.53,536.21 L48.98,536.38 L49.43,536.58 L49.90,536.80 L50.38,537.06 L50.87,537.36 L51.37,537.70 L51.88,538.05 L52.39,538.39 L52.90,538.70 L53.39,539.02 L53.87,539.34 L54.35,539.66 L54.85,539.96 L55.40,540.21 L56.00,540.41 L56.73,540.53 L57.59,540.59 L58.49,540.61 L59.35,540.61 L60.08,540.60 L60.60,540.61 L61.10,540.53 L61.60,540.53 L62.10,540.52 L62.60,540.52 L63.10,540.52 L63.60,540.52 L64.10,540.52 L64.60,540.52 L65.10,540.52 L65.60,540.52 L66.10,540.52 L66.60,540.52 L67.10,540.52 L67.60,540.52 L68.10,540.51 L68.60,540.51 L69.10,540.51 L69.60,540.51 L70.10,540.51 L70.60,540.51 L71.10,540.51 L71.60,540.51 L72.10,540.51 L72.60,540.51 L73.10,540.51 L73.60,540.51 L74.10,540.51 L74.60,540.51 L75.10,540.50 L75.60,540.50 L76.10,540.50 L76.60,540.50 L77.10,540.50 L77.60,540.50 L78.10,540.50 L78.60,540.50 L79.10,540.50 L79.60,540.50 L80.10,540.50 L80.60,540.50 L81.10,540.50 L81.60,540.50 L82.10,540.50 L82.60,540.50 L83.10,540.50 L83.60,540.50 L84.10,540.50 L84.60,540.50 L85.10,540.50 L85.60,540.50 L86.10,540.50 L86.60,540.49 L87.10,540.49 L87.60,540.49 L88.10,540.49 L88.60,540.49 L89.10,540.49 L89.60,540.49 L90.10,540.49 L90.60,540.49 L91.10,540.49 L91.60,540.49 L92.10,540.49 L92.60,540.49 L93.10,540.49 L93.60,540.49 L94.10,540.49 L94.60,540.49 L95.10,540.49 L95.60,540.49 L96.10,540.49 L96.60,540.49 L97.10,540.49 L97.60,540.49 L98.10,540.49 L98.60,540.49 L99.10,540.49 L99.60,540.49 L100.10,540.49 L100.60,540.49 L101.10,540.49 L101.60,540.49 L102.10,540.49 L102.60,540.49 L103.10,540.49 L103.60,540.49 L104.10,540.49 L104.60,540.49 L105.10,540.49 L105.60,540.49 L106.10,540.49 L106.60,540.49 L107.10,540.49 L107.60,540.49 L108.10,540.49 L108.60,540.49 L109.10,540.49 L109.60,540.49 L110.10,540.49 L110.60,540.49 L111.10,540.49 L111.60,540.49 L112.10,540.49 L112.60,540.49 L113.10,540.49 L113.60,540.49 L114.10,540.49 L114.60,540.49 L115.10,540.49 L115.60,540.49 L116.10,540.49 L116.60,540.49 L117.10,540.49 L117.60,540.49 L118.10,540.49 L118.60,540.49 L119.10,540.49 L119.60,540.49 L120.10,540.49 L120.60,540.49 L121.10,540.49 L121.60,540.49 L122.10,540.50 L122.60,540.50 L123.10,540.50 L123.60,540.50 L124.10,540.50 L124.60,540.50 L125.10,540.50 L125.60,540.50 L126.10,540.50 L126.60,540.50 L127.10,540.50 L127.60,540.50 L128.10,540.50 L128.60,540.50 L129.10,540.50 L129.60,540.50 L130.10,540.50 L130.60,540.50 L131.10,540.50 L131.60,540.50 L132.10,540.50 L132.60,540.50 L133.10,540.50 L133.60,540.50 L134.10,540.50 L134.60,540.50 L135.10,540.50 L135.60,540.50 L136.10,540.50 L136.60,540.50 L137.10,540.50 L137.60,540.50 L138.10,540.50 L138.60,540.50 L139.10,540.51 L139.60,540.51 L140.10,540.51 L140.60,540.51 L141.10,540.51 L141.60,540.51 L142.10,540.51 L142.60,540.51 L143.10,540.51 L143.60,540.51 L144.10,540.51 L144.60,540.51 L145.10,540.51 L145.60,540.51 L146.10,540.51 L146.60,540.51 L147.10,540.51 L147.60,540.51 L148.10,540.51 L148.60,540.51 L149.10,540.51 L149.60,540.51 L150.10,540.51 L150.60,540.51 L151.10,540.51 L151.60,540.51 L152.10,540.51 L152.60,540.51 L153.10,540.51 L153.60,540.52 L154.10,540.52 L154.60,540.52 L155.10,540.52 L155.60,540.52 L156.10,540.52 L156.60,540.52 L157.10,540.52 L157.60,540.52 L158.10,540.52 L158.60,540.52 L159.10,540.52 L159.60,540.52 L160.10,540.52 L160.60,540.52 L161.10,540.52 L161.60,540.52 L162.10,540.52 L162.60,540.52 L163.10,540.52 L163.60,540.52 L164.10,540.52 L164.60,540.52 L165.10,540.52 L165.60,540.52 L166.10,540.52 L166.60,540.52 L167.10,540.52 L167.60,540.52 L168.10,540.52 L168.60,540.52 L169.10,540.52 L169.60,540.52 L170.10,540.52 L170.60,540.53 L171.10,540.53 L171.60,540.53 L172.10,540.53 L172.60,540.53 L173.10,540.53 L173.60,540.53 L174.10,540.53 L174.60,540.53 L175.10,540.53 L175.60,540.53 L176.10,540.53 L176.60,540.53 L177.10,540.53 L177.60,540.53 L178.10,540.53 L178.60,540.53 L179.10,540.53 L179.60,540.53 L180.10,540.53 L180.60,540.53 L181.10,540.53 L181.60,540.53 L182.10,540.53 L182.60,540.53 L183.10,540.53 L183.60,540.53 L184.10,540.53 L184.60,540.53 L185.10,540.53 L185.60,540.53 L186.10,540.53 L186.60,540.53 L187.10,540.53 L187.60,540.53 L188.10,540.53 L188.60,540.53 L189.10,540.53 L189.60,540.53 L190.10,540.53 L190.60,540.53 L191.10,540.53 L191.60,540.53 L192.10,540.53 L192.60,540.53 L193.10,540.53 L193.60,540.53 L194.10,540.53 L194.60,540.53 L195.10,540.53 L195.60,540.53 L196.10,540.53 L196.60,540.53 L197.10,540.53 L197.60,540.53 L198.10,540.53 L198.60,540.53 L199.10,540.53 L199.60,540.53 L200.10,540.53 L200.60,540.53 L201.10,540.53 L201.60,540.53 L202.10,540.53 L202.60,540.53 L203.10,540.53 L203.60,540.53 L204.10,540.53 L204.60,540.52 L205.10,540.52 L205.60,540.52 L206.10,540.52 L206.60,540.52 L207.10,540.52 L207.60,540.52 L208.10,540.52 L208.60,540.52 L209.10,540.52 L209.60,540.52 L210.10,540.52 L210.60,540.52 L211.10,540.52 L211.60,540.52 L212.10,540.52 L212.60,540.52 L213.10,540.52 L213.60,540.52 L214.10,540.52 L214.60,540.52 L215.10,540.52 L215.60,540.52 L216.10,540.51 L216.60,540.51 L217.10,540.51 L217.60,540.51 L218.10,540.51 L218.60,540.51 L219.10,540.51 L219.60,540.51 L220.10,540.51 L220.60,540.51 L221.10,540.51 L221.60,540.51 L222.10,540.51 L222.60,540.51 L223.10,540.51 L223.60,540.50 L224.10,540.50 L224.60,540.50 L225.10,540.50 L225.60,540.50 L226.10,540.50 L226.60,540.50 L227.10,540.50 L227.60,540.50 L228.10,540.50 L228.60,540.50 L229.10,540.49 L229.60,540.49 L230.10,540.49 L230.60,540.49 L231.10,540.49 L231.60,540.49 L232.10,540.49 L232.60,540.49 L233.10,540.49 L233.60,540.49 L234.10,540.48 L234.60,540.48 L235.10,540.48 L235.60,540.48 L236.10,540.48 L236.60,540.48 L237.10,540.48 L237.60,540.48 L238.10,540.47 L238.60,540.47 L239.10,540.47 L239.60,540.47 L240.10,540.47 L240.60,540.47 L241.10,540.47 L241.60,540.47 L242.10,540.46 L242.60,540.46 L243.10,540.46 L243.60,540.46 L244.10,540.46 L244.60,540.46 L245.10,540.46 L245.60,540.45 L246.10,540.45 L246.60,540.45 L247.10,540.45 L247.60,540.45 L248.10,540.45 L248.60,540.44 L249.10,540.44 L249.60,540.44 L250.10,540.44 L250.60,540.44 L251.10,540.44 L251.60,540.43 L252.10,540.43 L252.20,540.43 L252.40,540.06 L252.68,539.51 L253.01,538.87 L253.37,538.18 L253.74,537.49 L254.10,536.85 L254.46,536.23 L254.82,535.57 L255.20,534.92 L255.59,534.31 L255.99,533.77 L256.40,533.35 L256.82,533.04 L257.26,532.81 L257.70,532.66 L258.16,532.59 L258.62,532.59 L259.10,532.65 L259.59,532.81 L260.11,533.05 L260.63,533.37 L261.16,533.74 L261.68,534.14 L262.20,534.55 L262.70,535.01 L263.20,535.52 L263.70,536.07 L264.20,536.62 L264.70,537.12 L265.20,537.55 L265.68,537.92 L266.11,538.24 L266.56,538.52 L267.04,538.77 L267.61,538.98 L268.30,539.15 L269.21,539.28 L270.34,539.36 L271.54,539.40 L272.71,539.43 L273.70,539.44 L274.40,539.46 L274.90,539.45 L275.40,539.48 L275.90,539.50 L276.40,539.52 L276.90,539.55 L277.40,539.57 L277.90,539.59 L278.40,539.61 L278.90,539.63 L279.40,539.66 L279.90,539.68 L280.40,539.70 L280.90,539.72 L281.40,539.74 L281.90,539.76 L282.40,539.78 L282.90,539.80 L283.40,539.82 L283.90,539.84 L284.40,539.86 L284.90,539.87 L285.40,539.89 L285.90,539.91 L286.40,539.93 L286.90,539.95 L287.40,539.96 L287.90,539.98 L288.40,540.00 L288.90,540.01 L289.40,540.03 L289.90,540.05 L290.40,540.06 L290.90,540.08 L291.40,540.10 L291.90,540.11 L292.40,540.13 L292.90,540.14 L293.40,540.16 L293.90,540.17 L294.40,540.19 L294.90,540.20 L295.40,540.21 L295.90,540.23 L296.40,540.24 L296.90,540.25 L297.40,540.27 L297.90,540.28 L298.40,540.29 L298.90,540.31 L299.40,540.32 L299.90,540.33 L300.40,540.34 L300.90,540.35 L301.40,540.36 L301.90,540.38 L302.40,540.39 L302.90,540.40 L303.40,540.41 L303.90,540.42 L304.40,540.43 L304.90,540.44 L305.40,540.45 L305.90,540.46 L306.40,540.47 L306.90,540.48 L307.40,540.49 L307.90,540.50 L308.40,540.50 L308.90,540.51 L309.40,540.52 L309.90,540.53 L310.40,540.54 L310.90,540.55 L311.40,540.55 L311.90,540.56 L312.40,540.57 L312.90,540.58 L313.40,540.58 L313.90,540.59 L314.40,540.60 L314.90,540.60 L315.40,540.61 L315.90,540.61 L316.40,540.62 L316.90,540.63 L317.40,540.63 L317.90,540.64 L318.40,540.64 L318.90,540.65 L319.40,540.65 L319.90,540.66 L320.40,540.66 L320.90,540.67 L321.40,540.67 L321.90,540.67 L322.40,540.68 L322.90,540.68 L323.40,540.69 L323.90,540.69 L324.40,540.69 L324.90,540.70 L325.40,540.70 L325.90,540.70 L326.40,540.70 L326.90,540.71 L327.40,540.71 L327.90,540.71 L328.40,540.71 L328.90,540.72 L329.40,540.72 L329.90,540.72 L330.40,540.72 L330.90,540.72 L331.40,540.72 L331.90,540.73 L332.40,540.73 L332.90,540.73 L333.40,540.73 L333.90,540.73 L334.40,540.73 L334.90,540.73 L335.40,540.73 L335.90,540.73 L336.40,540.73 L336.90,540.73 L337.40,540.73 L337.90,540.73 L338.40,540.73 L338.90,540.73 L339.40,540.73 L339.90,540.73 L340.40,540.73 L340.90,540.73 L341.40,540.72 L341.90,540.72 L342.40,540.72 L342.90,540.72 L343.40,540.72 L343.90,540.72 L344.40,540.72 L344.90,540.71 L345.40,540.71 L345.90,540.71 L346.40,540.71 L346.90,540.70 L347.40,540.70 L347.90,540.70 L348.40,540.70 L348.90,540.69 L349.40,540.69 L349.90,540.69 L350.40,540.68 L350.90,540.68 L351.40,540.68 L351.90,540.68 L352.40,540.67 L352.90,540.67 L353.40,540.66 L353.90,540.66 L354.40,540.66 L354.90,540.65 L355.40,540.65 L355.90,540.65 L356.40,540.64 L356.90,540.64 L357.40,540.63 L357.90,540.63 L358.40,540.62 L358.90,540.62 L359.40,540.61 L359.90,540.61 L360.40,540.61 L360.90,540.60 L361.40,540.60 L361.90,540.59 L362.40,540.59 L362.90,540.58 L363.40,540.58 L363.90,540.57 L364.40,540.56 L364.90,540.56 L365.40,540.55 L365.90,540.55 L366.40,540.54 L366.90,540.54 L367.40,540.53 L367.90,540.53 L368.40,540.52 L368.90,540.51 L369.40,540.51 L369.90,540.50 L370.40,540.50 L370.90,540.49 L371.40,540.48 L371.90,540.48 L372.40,540.47 L372.90,540.47 L373.40,540.46 L373.90,540.45 L374.40,540.45 L374.90,540.44 L375.40,540.43 L375.90,540.43 L376.40,540.42 L376.90,540.41 L377.40,540.41 L377.90,540.40 L378.40,540.39 L378.90,540.39 L379.40,540.38 L379.90,540.37 L380.40,540.37 L380.90,540.36 L381.40,540.35 L381.90,540.35 L382.40,540.34 L382.90,540.33 L383.40,540.33 L383.90,540.32 L384.40,540.31 L384.90,540.30 L385.40,540.30 L385.90,540.29 L386.40,540.28 L386.90,540.28 L387.40,540.27 L387.90,540.26 L388.40,540.25 L388.90,540.25 L389.40,540.24 L389.90,540.23 L390.40,540.23 L390.90,540.22 L391.40,540.21 L391.90,540.20 L392.40,540.20 L392.90,540.19 L393.40,540.18 L393.90,540.17 L394.40,540.17 L394.90,540.16 L395.40,540.15 L395.90,540.15 L396.40,540.14 L396.90,540.13 L397.40,540.12 L397.90,540.12 L398.40,540.11 L398.90,540.10 L399.40,540.09 L399.90,540.09 L400.40,540.08 L400.90,540.07 L401.40,540.07 L401.90,540.06 L402.40,540.05 L402.90,540.04 L403.40,540.04 L403.90,540.03 L404.40,540.02 L404.90,540.02 L405.40,540.01 L405.90,540.00 L406.40,539.99 L406.90,539.99 L407.40,539.98 L407.90,539.97 L408.40,539.97 L408.90,539.96 L409.40,539.95 L409.90,539.95 L410.40,539.94 L410.90,539.93 L411.40,539.93 L411.90,539.92 L412.40,539.91 L412.90,539.91 L413.40,539.90 L413.90,539.89 L414.40,539.89 L414.90,539.88 L415.40,539.87 L415.90,539.87 L416.40,539.86 L416.90,539.86 L417.40,539.85 L417.90,539.84 L418.40,539.84 L418.90,539.83 L419.40,539.83 L419.90,539.82 L420.40,539.81 L420.90,539.81 L421.40,539.80 L421.90,539.80 L422.40,539.79 L422.90,539.79 L423.40,539.78 L423.90,539.77 L424.40,539.77 L424.90,539.76 L425.40,539.76 L425.90,539.75 L426.40,539.75 L426.90,539.74 L427.40,539.74 L427.90,539.73 L428.40,539.73 L428.90,539.72 L429.40,539.72 L429.90,539.71 L430.40,539.71 L430.90,539.71 L431.40,539.70 L431.90,539.70 L432.40,539.69 L432.90,539.69 L433.40,539.68 L433.90,539.68 L434.40,539.68 L434.90,539.67 L435.40,539.67 L435.90,539.67 L436.40,539.66 L436.90,539.66 L437.40,539.65 L437.90,539.65 L438.40,539.65 L438.90,539.65 L439.40,539.64 L439.90,539.64 L440.40,539.64 L440.90,539.63 L441.40,539.63 L441.90,539.63 L442.40,539.63 L442.90,539.62 L443.40,539.62 L443.90,539.62 L444.40,539.62 L444.90,539.62 L445.40,539.61 L445.90,539.61 L446.40,539.61 L446.90,539.61 L447.40,539.61 L447.90,539.61 L448.40,539.61 L448.90,539.61 L449.40,539.60 L449.90,539.60 L450.40,539.60 L450.90,539.60 L451.40,539.60 L451.90,539.60 L452.40,539.60 L452.90,539.60 L453.40,539.60 L453.90,539.60 L454.40,539.60 L454.90,539.60 L455.40,539.60 L455.90,539.60 L456.40,539.61 L456.90,539.61 L457.40,539.61 L457.90,539.61 L458.40,539.61 L458.90,539.61 L459.40,539.61 L459.90,539.62 L460.40,539.62 L460.90,539.62 L461.40,539.62 L461.90,539.62 L462.40,539.63 L462.90,539.63 L463.40,539.63 L463.90,539.64 L464.40,539.64 L464.90,539.64 L465.40,539.65 L465.90,539.65 L466.40,539.65 L466.90,539.66 L467.40,539.66 L467.90,539.67 L468.40,539.67 L468.90,539.67 L469.40,539.68 L469.90,539.68 L470.40,539.71 L470.90,539.73 L471.40,539.76 L471.66,539.95 L472.02,540.23 L472.45,540.55 L472.91,540.88 L473.37,541.20 L473.80,541.45 L474.20,541.68 L474.60,541.90 L474.99,542.10 L475.39,542.26 L475.79,542.35 L476.20,542.35 L476.64,542.22 L477.12,541.97 L477.60,541.65 L478.05,541.33 L478.43,541.04 L478.70,540.85 L479.20,539.72 L479.70,538.97 L480.20,538.23 L480.70,537.47 L481.20,536.73 L481.70,535.99 L482.20,535.25 L482.70,534.52 L483.20,533.80 L483.70,533.08 L484.20,532.37 L484.70,531.66 L485.20,530.96 L485.70,530.26 L486.20,529.57 L486.70,528.88 L487.20,528.20 L487.70,527.52 L488.20,526.85 L488.70,526.19 L489.20,525.53 L489.70,524.87 L490.20,524.22 L490.70,523.57 L491.20,522.93 L491.70,522.30 L492.20,521.67 L492.70,521.04 L493.20,520.42 L493.70,519.80 L494.20,519.19 L494.70,518.58 L495.20,517.98 L495.70,517.38 L496.20,516.79 L496.70,516.20 L497.20,515.62 L497.70,515.04 L498.20,514.47 L498.70,513.90 L499.20,513.33 L499.70,512.77 L500.20,512.21 L500.70,511.66 L501.20,511.10 L501.70,510.56 L502.20,510.01 L502.70,509.47 L503.20,508.94 L503.70,508.41 L504.20,507.88 L504.70,507.36 L505.20,506.84 L505.70,506.33 L506.20,505.82 L506.70,505.31 L507.20,504.81 L507.70,504.31 L508.20,503.82 L508.70,503.33 L509.20,502.84 L509.70,502.36 L510.20,501.88 L510.70,501.41 L511.20,500.93 L511.70,500.47 L512.20,500.00 L512.70,499.55 L513.20,499.09 L513.70,498.64 L514.20,498.19 L514.70,497.74 L515.20,497.30 L515.70,496.87 L516.20,496.43 L516.70,496.00 L517.20,495.57 L517.70,495.15 L518.20,494.73 L518.70,494.31 L519.20,493.90 L519.70,493.49 L520.20,493.08 L520.70,492.68 L521.20,492.27 L521.70,491.88 L522.20,491.48 L522.70,491.09 L523.20,490.70 L523.70,490.32 L524.20,489.94 L524.70,489.56 L525.20,489.18 L525.70,488.81 L526.20,488.44 L526.70,488.07 L527.20,487.71 L527.70,487.35 L528.20,486.99 L528.70,486.63 L529.20,486.28 L529.70,485.93 L530.20,485.58 L530.70,485.24 L531.20,484.90 L531.70,484.56 L532.20,484.23 L532.70,483.90 L533.20,483.57 L533.70,483.24 L534.20,482.92 L534.70,482.59 L535.20,482.28 L535.70,481.96 L536.20,481.65 L536.70,481.34 L537.20,481.03 L537.70,480.72 L538.20,480.42 L538.70,480.12 L539.20,479.83 L539.70,479.53 L540.20,479.24 L540.70,478.95 L541.20,478.66 L541.70,478.38 L542.20,478.10 L542.70,477.82 L543.20,477.54 L543.70,477.27 L544.20,477.00 L544.70,476.73 L545.20,476.46 L545.70,476.19 L546.20,475.93 L546.70,475.67 L547.20,475.42 L547.70,475.16 L548.20,474.91 L548.70,474.66 L549.20,474.41 L549.70,474.16 L550.20,473.92 L550.70,473.68 L551.20,473.44 L551.70,473.20 L552.20,472.97 L552.70,472.74 L553.20,472.51 L553.70,472.28 L554.20,472.05 L554.70,471.83 L555.20,471.61 L555.70,471.39 L556.20,471.17 L556.70,470.96 L557.20,470.75 L557.70,470.53 L558.20,470.33 L558.70,470.12 L559.20,469.91 L559.70,469.71 L560.20,469.51 L560.70,469.31 L561.20,469.11 L561.70,468.92 L562.20,468.73 L562.70,468.53 L563.20,468.35 L563.70,468.16 L564.20,467.97 L564.70,467.79 L565.20,467.61 L565.70,467.43 L566.20,467.25 L566.70,467.07 L567.20,466.90 L567.70,466.72 L568.20,466.55 L568.70,466.38 L569.20,466.22 L569.70,466.05 L570.20,465.88 L570.70,465.72 L571.20,465.56 L571.70,465.40 L572.20,465.24 L572.70,465.09 L573.20,464.93 L573.70,464.78 L574.20,464.63 L574.70,464.48 L575.20,464.33 L575.70,464.19 L576.20,464.04 L576.70,463.90 L577.20,463.76 L577.70,463.61 L578.20,463.48 L578.70,463.34 L579.20,463.20 L579.70,463.07 L580.20,462.94 L580.70,462.80 L581.20,462.67 L581.70,462.55 L582.20,462.42 L582.70,462.29 L583.20,462.17 L583.70,462.05 L584.20,461.92 L584.70,461.80 L585.20,461.68 L585.70,461.57 L586.20,461.45 L586.70,461.34 L587.20,461.22 L587.70,461.11 L588.20,461.00 L588.70,460.89 L589.20,460.78 L589.70,460.67 L590.20,460.57 L590.70,460.46 L591.20,460.36 L591.70,460.25 L592.20,460.15 L592.70,460.05 L593.20,459.95 L593.70,459.86 L594.20,459.76 L594.70,459.66 L595.20,459.57 L595.70,459.48 L596.20,459.38 L596.70,459.29 L597.20,459.20 L597.70,459.11 L598.20,459.02 L598.70,458.94 L599.20,458.85 L599.70,458.76 L600.20,458.68 L600.70,458.59 L601.20,458.51 L601.70,458.42 L602.20,458.34 L602.70,458.26 L603.20,458.17 L603.70,458.09 L604.20,458.01 L604.70,457.93 L605.20,457.86 L605.70,457.78 L606.20,457.70 L606.70,457.63 L607.20,457.55 L607.70,457.48 L608.20,457.40 L608.70,457.33 L609.20,457.26 L609.70,457.19 L610.20,457.12 L610.70,457.05 L611.20,456.98 L611.70,456.91 L612.20,456.84 L612.70,456.78 L613.20,456.71 L613.70,456.64 L614.20,456.58 L614.70,456.52 L615.20,456.45 L615.70,456.39 L616.20,456.33 L616.70,456.26 L617.20,456.20 L617.70,456.14 L618.20,456.08 L618.70,456.02 L619.20,455.96 L619.70,455.90 L620.20,455.85 L620.70,455.79 L621.20,455.73 L621.70,455.67 L622.20,455.62 L622.70,455.56 L623.20,455.51 L623.70,455.45 L624.20,455.40 L624.70,455.34 L625.20,455.29 L625.70,455.23 L626.20,455.18 L626.70,455.13 L627.20,455.08 L627.70,455.02 L628.20,454.97 L628.70,454.92 L629.20,454.87 L629.70,454.82 L630.20,454.77 L630.70,454.72 L631.20,454.67 L631.70,454.62 L632.20,454.57 L632.70,454.52 L633.20,454.47 L633.70,454.42 L634.20,454.37 L634.70,454.32 L635.20,454.27 L635.70,454.22 L636.20,454.18 L636.70,454.13 L637.20,454.08 L637.70,454.03 L638.20,453.99 L638.70,453.94 L639.20,453.89 L639.70,453.85 L640.20,453.80 L640.70,453.76 L641.20,453.71 L641.70,453.66 L642.20,453.62 L642.70,453.57 L643.20,453.53 L643.70,453.49 L644.20,453.44 L644.70,453.40 L645.20,453.35 L645.70,453.31 L646.20,453.27 L646.70,453.22 L647.20,453.18 L647.70,453.14 L648.20,453.10 L648.70,453.05 L649.20,453.01 L649.70,452.97 L650.20,452.93 L650.70,452.89 L651.20,452.85 L651.70,452.81 L652.20,452.77 L652.70,452.73 L653.20,452.69 L653.70,452.65 L654.20,452.61 L654.70,452.57 L655.20,452.53 L655.70,452.49 L656.20,452.45 L656.70,452.41 L657.20,452.37 L657.70,452.34 L658.20,452.30 L658.70,452.26 L659.20,452.22 L659.70,452.19 L660.20,452.15 L660.70,452.11 L661.20,452.08 L661.70,452.04 L662.20,452.01 L662.70,451.97 L663.20,451.93 L663.70,451.90 L664.20,451.86 L664.70,451.83 L665.20,451.79 L665.70,451.76 L666.20,451.73 L666.70,451.69 L667.20,451.66 L667.70,451.62 L668.20,451.59 L668.70,451.56 L669.20,451.53 L669.70,451.49 L670.20,451.46 L670.70,451.43 L671.20,451.40 L671.70,451.36 L672.20,451.33 L672.70,451.30 L673.20,451.27 L673.70,451.24 L674.20,451.21 L674.70,451.18 L675.20,451.15 L675.70,451.12 L676.20,451.09 L676.70,451.06 L677.20,451.03 L677.70,451.00 L678.20,450.97 L678.70,450.94 L679.20,450.91 L679.70,450.88 L680.20,450.86 L680.70,450.83 L681.20,450.80 L681.70,450.77 L682.20,450.74 L682.70,450.72 L683.20,450.69 L683.70,450.66 L684.20,450.64 L684.70,450.61 L685.20,450.58 L685.70,450.56 L686.20,450.53 L686.70,450.51 L687.20,450.48 L687.70,450.46 L688.20,450.43 L688.70,450.41 L689.20,450.38 L689.70,450.36 L690.20,450.33 L690.70,450.31 L691.20,450.29 L691.70,450.26 L692.20,450.24 L692.70,450.22 L693.20,450.19 L693.70,450.17 L694.20,450.15 L694.70,450.13 L695.20,450.10 L695.70,450.08 L696.20,450.06 L696.70,450.04 L697.20,450.02 L697.70,450.00 L698.20,449.98 L698.70,449.95 L699.20,449.93 L699.70,449.91 L700.20,449.89 L700.70,449.88 L701.20,449.86 L701.70,449.84 L702.20,449.83 L702.70,449.81 L703.20,449.80 L703.70,449.78 L704.20,449.76 L704.70,449.75 L705.20,449.73 L705.70,449.72 L706.20,449.70 L706.70,449.69 L707.20,449.67 L707.70,449.66 L708.20,449.65 L708.70,449.63 L709.20,449.62 L709.70,449.60 L710.20,449.59 L710.70,449.58 L711.20,449.56 L711.70,449.55 L712.20,449.54 L712.70,449.53 L713.20,449.51 L713.70,449.50 L714.20,449.49 L714.70,449.48 L715.20,449.47 L715.70,449.45 L716.20,449.44 L716.70,449.43 L717.20,449.42 L717.70,449.41 L718.20,449.40 L718.70,449.39 L719.20,449.38 L719.70,449.37 L720.20,449.36 L720.70,449.35 L721.20,449.34 L721.70,449.33 L722.20,449.32 L722.70,449.31 L723.20,449.30 L723.70,449.30 L724.20,449.29 L724.70,449.28 L725.20,449.27 L725.70,449.26 L726.20,449.26 L726.70,449.25 L727.20,449.24 L727.70,449.23 L728.20,449.23 L728.70,449.22 L729.20,449.21 L729.70,449.21 L730.20,449.20 L730.70,449.19 L731.20,449.19 L731.70,449.18 L732.20,449.18 L732.70,449.17 L733.20,449.17 L733.70,449.16 L734.20,449.16 L734.70,449.15 L735.20,449.15 L735.70,449.14 L736.20,449.14 L736.70,449.13 L737.20,449.13 L737.70,449.13 L738.20,449.12 L738.70,449.12 L739.20,449.12 L739.70,449.11 L740.20,449.11 L740.70,449.11 L741.20,449.10 L741.70,449.10 L742.20,449.10 L742.70,449.10 L743.20,449.10 L743.70,449.09 L744.20,449.09 L744.70,449.09 L745.20,449.09 L745.70,449.09 L746.20,449.09 L746.70,449.09 L747.20,449.09 L747.70,449.08 L748.20,449.08 L748.70,449.08 L749.20,449.08 L749.70,449.08 L750.20,449.08 L750.70,449.08 L751.20,449.09 L751.70,449.09 L752.20,449.09 L752.70,449.09 L753.20,449.09 L753.70,449.09 L754.20,449.09 L754.70,449.09 L755.20,449.09 L755.70,449.10 L756.20,449.10 L756.70,449.10 L757.20,449.10 L757.70,449.11 L758.20,449.11 L758.70,449.11 L759.20,449.11 L759.70,449.12 L760.20,449.12 L760.70,449.12 L761.20,449.13 L761.70,449.13 L762.20,449.13 L762.70,449.14 L763.20,449.14 L763.70,449.15 L764.20,449.15 L764.50,449.15" fill="none" stroke="#fbe168" stroke-width="1.6" stroke-linejoin="round" shape-rendering="geometricPrecision" clip-path="url(#c436)"/>
<filter id="gf"><feOffset dx="0" dy="0"/></filter>
<g filter="url(#gf)">
<text x="28.8" y="215" text-anchor="end" class="tl">0</text>
<text x="28.8" y="170" text-anchor="end" class="tl">0.4</text>
<text x="28.8" y="125" text-anchor="end" class="tl">0.8</text>
<text x="398.5" y="76.7" text-anchor="middle" class="tt" textLength="28.8" lengthAdjust="spacingAndGlyphs">theta</text>
<text x="28.8" y="382" text-anchor="end" class="tl">0</text>
<text x="28.8" y="340" text-anchor="end" class="tl">0.4</text>
<text x="28.8" y="298" text-anchor="end" class="tl">0.8</text>
<text x="398.5" y="253.6" text-anchor="middle" class="tt" textLength="18.5" lengthAdjust="spacingAndGlyphs">phi</text>
<text x="28.8" y="544" text-anchor="end" class="tl">0</text>
<text x="28.8" y="508" text-anchor="end" class="tl">0.4</text>
<text x="28.8" y="472" text-anchor="end" class="tl">0.8</text>
<text x="398.5" y="430.8" text-anchor="middle" class="tt" textLength="5.6" lengthAdjust="spacingAndGlyphs">r</text>
<text x="33.5" y="576" text-anchor="middle" class="tl">0</text>
<text x="106.6" y="576" text-anchor="middle" class="tl">1</text>
<text x="179.7" y="576" text-anchor="middle" class="tl">2</text>
<text x="252.8" y="576" text-anchor="middle" class="tl">3</text>
<text x="325.9" y="576" text-anchor="middle" class="tl">4</text>
<text x="399.0" y="576" text-anchor="middle" class="tl">5</text>
<text x="472.1" y="576" text-anchor="middle" class="tl">6</text>
<text x="545.2" y="576" text-anchor="middle" class="tl">7</text>
<text x="618.3" y="576" text-anchor="middle" class="tl">8</text>
<text x="691.4" y="576" text-anchor="middle" class="tl">9</text>
<text x="764.5" y="576" text-anchor="middle" class="tl">10</text>
</g>
<!-- status bar -->
<rect x="1" y="592" width="783" height="23" fill="#e6e6e6"/>
<rect x="1" y="592" width="783" height="1" fill="#7d7d7d"/>
<text x="8.4" y="607.8" font-size="12" fill="#1e1e1e" textLength="34" lengthAdjust="spacingAndGlyphs">Ready</text>
<text x="634" y="607.8" font-size="12" fill="#1e1e1e" textLength="76.6" lengthAdjust="spacingAndGlyphs">Sample based</text>
<text x="723.2" y="607.8" font-size="12" fill="#1e1e1e" textLength="56.8" lengthAdjust="spacingAndGlyphs">T=10.0000</text>
</svg>
</body></html>
